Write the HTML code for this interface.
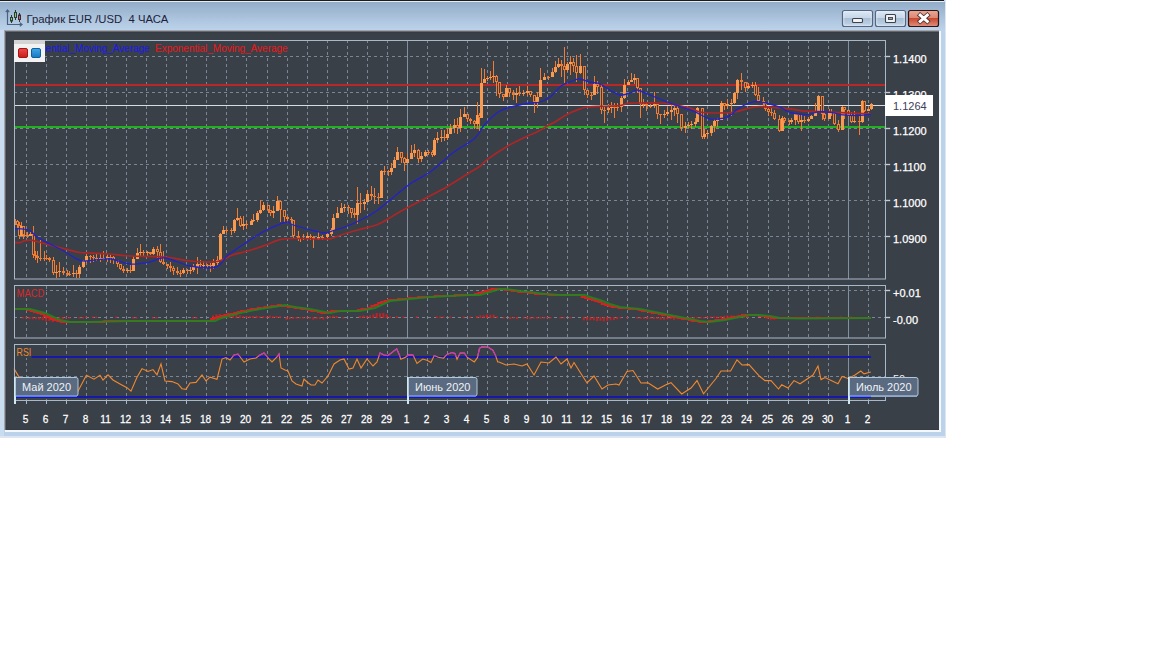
<!DOCTYPE html>
<html><head><meta charset="utf-8"><title>chart</title>
<style>html,body{margin:0;padding:0;background:#ffffff;width:1152px;height:648px;overflow:hidden;font-family:"Liberation Sans",sans-serif;}
svg{position:absolute;left:0;top:0;}</style></head>
<body><svg width="1152" height="648" viewBox="0 0 1152 648">
<defs><linearGradient id="tb" x1="0" y1="0" x2="0" y2="1"><stop offset="0" stop-color="#93adc9"/><stop offset="1" stop-color="#bcd3ea"/></linearGradient><linearGradient id="btn" x1="0" y1="0" x2="0" y2="1"><stop offset="0" stop-color="#dde9f5"/><stop offset="0.5" stop-color="#c5d6e8"/><stop offset="0.5" stop-color="#a9bfd6"/><stop offset="1" stop-color="#c3d5e8"/></linearGradient><linearGradient id="cls" x1="0" y1="0" x2="0" y2="1"><stop offset="0" stop-color="#eaa898"/><stop offset="0.5" stop-color="#dc8470"/><stop offset="0.5" stop-color="#c74a30"/><stop offset="1" stop-color="#e09080"/></linearGradient><linearGradient id="rq" x1="0" y1="0" x2="0" y2="1"><stop offset="0" stop-color="#f04848"/><stop offset="1" stop-color="#c81c1c"/></linearGradient><linearGradient id="bq" x1="0" y1="0" x2="0" y2="1"><stop offset="0" stop-color="#40a8e8"/><stop offset="1" stop-color="#1878c0"/></linearGradient><clipPath id="mainclip"><rect x="15" y="41" width="870" height="238"/></clipPath><clipPath id="rsiup"><rect x="15" y="340" width="870" height="16.5"/></clipPath></defs>
<rect x="0" y="0" width="946" height="438" fill="#dde6ef"/>
<rect x="0" y="0" width="945" height="436" fill="#bcd2ea"/>
<rect x="0" y="30" width="4" height="406" fill="#cadcf0"/>
<rect x="0" y="2" width="945" height="28" fill="url(#tb)"/>
<rect x="0" y="0" width="944" height="1" fill="#1c1c1c"/>
<rect x="0" y="1" width="944" height="1" fill="#e4eef8"/>
<rect x="4" y="30" width="935" height="400" fill="#a2a6ac"/>
<rect x="5" y="31" width="934" height="399" fill="#64686e"/>
<rect x="6" y="32" width="933" height="398" fill="#363c44"/>
<rect x="7" y="33" width="932" height="396" fill="#3a4048"/>
<rect x="5" y="430" width="936" height="2" fill="#f4f8fc"/>
<rect x="939" y="31" width="2" height="401" fill="#f4f8fc"/>
<g stroke-width="1" fill="none"><path d="M7.5 10.5 V24.5 H21.5" stroke="#4a6282" stroke-width="1.2"/><path d="M5.8 12.2 L7.5 10 L9.2 12.2 M19.8 22.8 L22 24.5 L19.8 26.2" stroke="#4a6282" stroke-width="1.2"/><path d="M11.5 15 V23 M15.5 10 V20 M19.5 13 V22" stroke="#2c3440"/><rect x="10.5" y="17.5" width="2" height="3.5" fill="#8cc07c" stroke="#284030"/><rect x="14.5" y="12.5" width="2" height="5" fill="#8cc07c" stroke="#284030"/><rect x="18.5" y="15" width="2" height="4.5" fill="#b86878" stroke="#402830"/></g>
<text x="26.5" y="23" font-family="Liberation Sans" font-size="11.3" fill="#1e1e3a" xml:space="preserve">График EUR /USD&#160; 4 ЧАСА</text>
<rect x="842.5" y="10.5" width="30" height="16" rx="2" fill="url(#btn)" stroke="#56667e" stroke-width="1.2"/><rect x="843.8" y="11.8" width="27.4" height="13.4" rx="1" fill="none" stroke="#eef4fa" stroke-opacity="0.6"/>
<rect x="852.5" y="18.5" width="10" height="4" rx="1" fill="#f4f2f0" stroke="#3a4250" stroke-width="1.1"/>
<rect x="875.5" y="10.5" width="30" height="16" rx="2" fill="url(#btn)" stroke="#56667e" stroke-width="1.2"/><rect x="876.8" y="11.8" width="27.4" height="13.4" rx="1" fill="none" stroke="#eef4fa" stroke-opacity="0.6"/>
<rect x="885.5" y="14.5" width="10" height="8" rx="1" fill="#f2f2f2" stroke="#3a4250" stroke-width="1.1"/><rect x="888.5" y="17.5" width="4" height="2" fill="#9aa0a8" stroke="#3a4250" stroke-width="0.9"/>
<rect x="908.5" y="10.5" width="30" height="16" rx="2" fill="url(#cls)" stroke="#2a1414" stroke-width="1.2"/>
<path d="M920.2 15.2 L927.3 21.3 M927.3 15.2 L920.2 21.3" stroke="#4a2a28" stroke-width="4.6" stroke-linecap="square"/><path d="M920.2 15.2 L927.3 21.3 M927.3 15.2 L920.2 21.3" stroke="#ffffff" stroke-width="3" stroke-linecap="square"/>
<g shape-rendering="crispEdges">
<line x1="26.5" y1="40" x2="26.5" y2="279" stroke="#7c8692" stroke-width="1" stroke-dasharray="3 3"/>
<line x1="46.5" y1="40" x2="46.5" y2="279" stroke="#7c8692" stroke-width="1" stroke-dasharray="3 3"/>
<line x1="66.5" y1="40" x2="66.5" y2="279" stroke="#7c8692" stroke-width="1" stroke-dasharray="3 3"/>
<line x1="86.5" y1="40" x2="86.5" y2="279" stroke="#7c8692" stroke-width="1" stroke-dasharray="3 3"/>
<line x1="106.5" y1="40" x2="106.5" y2="279" stroke="#7c8692" stroke-width="1" stroke-dasharray="3 3"/>
<line x1="126.5" y1="40" x2="126.5" y2="279" stroke="#7c8692" stroke-width="1" stroke-dasharray="3 3"/>
<line x1="146.5" y1="40" x2="146.5" y2="279" stroke="#7c8692" stroke-width="1" stroke-dasharray="3 3"/>
<line x1="166.5" y1="40" x2="166.5" y2="279" stroke="#7c8692" stroke-width="1" stroke-dasharray="3 3"/>
<line x1="186.5" y1="40" x2="186.5" y2="279" stroke="#7c8692" stroke-width="1" stroke-dasharray="3 3"/>
<line x1="206.5" y1="40" x2="206.5" y2="279" stroke="#7c8692" stroke-width="1" stroke-dasharray="3 3"/>
<line x1="226.5" y1="40" x2="226.5" y2="279" stroke="#7c8692" stroke-width="1" stroke-dasharray="3 3"/>
<line x1="246.5" y1="40" x2="246.5" y2="279" stroke="#7c8692" stroke-width="1" stroke-dasharray="3 3"/>
<line x1="267.5" y1="40" x2="267.5" y2="279" stroke="#7c8692" stroke-width="1" stroke-dasharray="3 3"/>
<line x1="287.5" y1="40" x2="287.5" y2="279" stroke="#7c8692" stroke-width="1" stroke-dasharray="3 3"/>
<line x1="307.5" y1="40" x2="307.5" y2="279" stroke="#7c8692" stroke-width="1" stroke-dasharray="3 3"/>
<line x1="327.5" y1="40" x2="327.5" y2="279" stroke="#7c8692" stroke-width="1" stroke-dasharray="3 3"/>
<line x1="347.5" y1="40" x2="347.5" y2="279" stroke="#7c8692" stroke-width="1" stroke-dasharray="3 3"/>
<line x1="367.5" y1="40" x2="367.5" y2="279" stroke="#7c8692" stroke-width="1" stroke-dasharray="3 3"/>
<line x1="387.5" y1="40" x2="387.5" y2="279" stroke="#7c8692" stroke-width="1" stroke-dasharray="3 3"/>
<line x1="407.5" y1="40" x2="407.5" y2="279" stroke="#8090a0" stroke-width="1"/>
<line x1="427.5" y1="40" x2="427.5" y2="279" stroke="#7c8692" stroke-width="1" stroke-dasharray="3 3"/>
<line x1="447.5" y1="40" x2="447.5" y2="279" stroke="#7c8692" stroke-width="1" stroke-dasharray="3 3"/>
<line x1="467.5" y1="40" x2="467.5" y2="279" stroke="#7c8692" stroke-width="1" stroke-dasharray="3 3"/>
<line x1="487.5" y1="40" x2="487.5" y2="279" stroke="#7c8692" stroke-width="1" stroke-dasharray="3 3"/>
<line x1="507.5" y1="40" x2="507.5" y2="279" stroke="#7c8692" stroke-width="1" stroke-dasharray="3 3"/>
<line x1="527.5" y1="40" x2="527.5" y2="279" stroke="#7c8692" stroke-width="1" stroke-dasharray="3 3"/>
<line x1="547.5" y1="40" x2="547.5" y2="279" stroke="#7c8692" stroke-width="1" stroke-dasharray="3 3"/>
<line x1="567.5" y1="40" x2="567.5" y2="279" stroke="#7c8692" stroke-width="1" stroke-dasharray="3 3"/>
<line x1="587.5" y1="40" x2="587.5" y2="279" stroke="#7c8692" stroke-width="1" stroke-dasharray="3 3"/>
<line x1="607.5" y1="40" x2="607.5" y2="279" stroke="#7c8692" stroke-width="1" stroke-dasharray="3 3"/>
<line x1="627.5" y1="40" x2="627.5" y2="279" stroke="#7c8692" stroke-width="1" stroke-dasharray="3 3"/>
<line x1="647.5" y1="40" x2="647.5" y2="279" stroke="#7c8692" stroke-width="1" stroke-dasharray="3 3"/>
<line x1="667.5" y1="40" x2="667.5" y2="279" stroke="#7c8692" stroke-width="1" stroke-dasharray="3 3"/>
<line x1="687.5" y1="40" x2="687.5" y2="279" stroke="#7c8692" stroke-width="1" stroke-dasharray="3 3"/>
<line x1="707.5" y1="40" x2="707.5" y2="279" stroke="#7c8692" stroke-width="1" stroke-dasharray="3 3"/>
<line x1="727.5" y1="40" x2="727.5" y2="279" stroke="#7c8692" stroke-width="1" stroke-dasharray="3 3"/>
<line x1="747.5" y1="40" x2="747.5" y2="279" stroke="#7c8692" stroke-width="1" stroke-dasharray="3 3"/>
<line x1="768.5" y1="40" x2="768.5" y2="279" stroke="#7c8692" stroke-width="1" stroke-dasharray="3 3"/>
<line x1="788.5" y1="40" x2="788.5" y2="279" stroke="#7c8692" stroke-width="1" stroke-dasharray="3 3"/>
<line x1="808.5" y1="40" x2="808.5" y2="279" stroke="#7c8692" stroke-width="1" stroke-dasharray="3 3"/>
<line x1="828.5" y1="40" x2="828.5" y2="279" stroke="#7c8692" stroke-width="1" stroke-dasharray="3 3"/>
<line x1="848.5" y1="40" x2="848.5" y2="279" stroke="#8090a0" stroke-width="1"/>
<line x1="868.5" y1="40" x2="868.5" y2="279" stroke="#7c8692" stroke-width="1" stroke-dasharray="3 3"/>
<line x1="14" y1="56.5" x2="886" y2="56.5" stroke="#7c8692" stroke-width="1" stroke-dasharray="3 3"/>
<line x1="14" y1="92.5" x2="886" y2="92.5" stroke="#7c8692" stroke-width="1" stroke-dasharray="3 3"/>
<line x1="14" y1="128.5" x2="886" y2="128.5" stroke="#7c8692" stroke-width="1" stroke-dasharray="3 3"/>
<line x1="14" y1="164.5" x2="886" y2="164.5" stroke="#7c8692" stroke-width="1" stroke-dasharray="3 3"/>
<line x1="14" y1="200.5" x2="886" y2="200.5" stroke="#7c8692" stroke-width="1" stroke-dasharray="3 3"/>
<line x1="14" y1="236.5" x2="886" y2="236.5" stroke="#7c8692" stroke-width="1" stroke-dasharray="3 3"/>
</g>
<rect x="14" y="84" width="872" height="2" fill="#b82828"/>
<rect x="14" y="105" width="872" height="1" fill="#d8dce0"/>
<rect x="14" y="126" width="872" height="2" fill="#20b020"/>
<g clip-path="url(#mainclip)">
<rect x="15" y="219" width="1" height="6" fill="#f27c32"/>
<rect x="14" y="221" width="3" height="1" fill="#f27c32"/>
<rect x="17" y="220" width="1" height="9" fill="#f27c32"/>
<rect x="16" y="221" width="3" height="4" fill="#f27c32"/><rect x="17" y="222" width="1" height="2" fill="#3a4048"/>
<rect x="19" y="222" width="1" height="17" fill="#f27c32"/>
<rect x="18" y="225" width="3" height="11" fill="#f27c32"/><rect x="19" y="226" width="1" height="9" fill="#3a4048"/>
<rect x="21" y="222" width="1" height="14" fill="#f27c32"/>
<rect x="20" y="226" width="3" height="10" fill="#f89a50"/>
<rect x="23" y="226" width="1" height="13" fill="#f27c32"/>
<rect x="22" y="226" width="3" height="9" fill="#f27c32"/><rect x="23" y="227" width="1" height="7" fill="#3a4048"/>
<rect x="24" y="233" width="1" height="4" fill="#f27c32"/>
<rect x="23" y="235" width="3" height="1" fill="#f27c32"/>
<rect x="27" y="232" width="1" height="6" fill="#f27c32"/>
<rect x="26" y="235" width="3" height="1" fill="#f27c32"/>
<rect x="30" y="232" width="1" height="4" fill="#f27c32"/>
<rect x="29" y="234" width="3" height="2" fill="#f89a50"/>
<rect x="33" y="226" width="1" height="32" fill="#f27c32"/>
<rect x="32" y="234" width="3" height="21" fill="#f27c32"/><rect x="33" y="235" width="1" height="19" fill="#3a4048"/>
<rect x="35" y="251" width="1" height="9" fill="#f27c32"/>
<rect x="34" y="255" width="3" height="1" fill="#f27c32"/>
<rect x="37" y="251" width="1" height="12" fill="#f27c32"/>
<rect x="36" y="256" width="3" height="2" fill="#f27c32"/>
<rect x="40" y="240" width="1" height="21" fill="#f27c32"/>
<rect x="39" y="258" width="3" height="1" fill="#f27c32"/>
<rect x="44" y="251" width="1" height="10" fill="#f27c32"/>
<rect x="43" y="258" width="3" height="1" fill="#f27c32"/>
<rect x="46" y="255" width="1" height="5" fill="#f27c32"/>
<rect x="45" y="258" width="3" height="1" fill="#f27c32"/>
<rect x="49" y="257" width="1" height="5" fill="#f27c32"/>
<rect x="48" y="258" width="3" height="2" fill="#f27c32"/>
<rect x="53" y="257" width="1" height="18" fill="#f27c32"/>
<rect x="52" y="260" width="3" height="13" fill="#f27c32"/><rect x="53" y="261" width="1" height="11" fill="#3a4048"/>
<rect x="56" y="265" width="1" height="13" fill="#f27c32"/>
<rect x="55" y="272" width="3" height="1" fill="#f89a50"/>
<rect x="59" y="262" width="1" height="15" fill="#f27c32"/>
<rect x="58" y="271" width="3" height="1" fill="#f89a50"/>
<rect x="63" y="267" width="1" height="8" fill="#f27c32"/>
<rect x="62" y="271" width="3" height="2" fill="#f27c32"/>
<rect x="67" y="270" width="1" height="6" fill="#f27c32"/>
<rect x="66" y="273" width="3" height="1" fill="#f27c32"/>
<rect x="69" y="271" width="1" height="5" fill="#f27c32"/>
<rect x="68" y="274" width="3" height="1" fill="#f27c32"/>
<rect x="73" y="265" width="1" height="12" fill="#f27c32"/>
<rect x="72" y="273" width="3" height="1" fill="#f89a50"/>
<rect x="76" y="270" width="1" height="8" fill="#f27c32"/>
<rect x="75" y="273" width="3" height="1" fill="#f27c32"/>
<rect x="79" y="265" width="1" height="13" fill="#f27c32"/>
<rect x="78" y="267" width="3" height="7" fill="#f89a50"/>
<rect x="83" y="260" width="1" height="8" fill="#f27c32"/>
<rect x="82" y="261" width="3" height="6" fill="#f89a50"/>
<rect x="86" y="254" width="1" height="9" fill="#f27c32"/>
<rect x="85" y="256" width="3" height="5" fill="#f89a50"/>
<rect x="90" y="255" width="1" height="8" fill="#f27c32"/>
<rect x="89" y="256" width="3" height="1" fill="#f27c32"/>
<rect x="93" y="255" width="1" height="7" fill="#f27c32"/>
<rect x="92" y="257" width="3" height="1" fill="#f27c32"/>
<rect x="96" y="254" width="1" height="7" fill="#f27c32"/>
<rect x="95" y="258" width="3" height="1" fill="#f27c32"/>
<rect x="100" y="253" width="1" height="9" fill="#f27c32"/>
<rect x="99" y="258" width="3" height="1" fill="#f89a50"/>
<rect x="103" y="251" width="1" height="9" fill="#f27c32"/>
<rect x="102" y="258" width="3" height="1" fill="#f89a50"/>
<rect x="107" y="254" width="1" height="8" fill="#f27c32"/>
<rect x="106" y="257" width="3" height="1" fill="#f89a50"/>
<rect x="110" y="255" width="1" height="8" fill="#f27c32"/>
<rect x="109" y="257" width="3" height="1" fill="#f27c32"/>
<rect x="113" y="256" width="1" height="8" fill="#f27c32"/>
<rect x="112" y="257" width="3" height="3" fill="#f27c32"/><rect x="113" y="258" width="1" height="1" fill="#3a4048"/>
<rect x="117" y="260" width="1" height="7" fill="#f27c32"/>
<rect x="116" y="260" width="3" height="4" fill="#f27c32"/><rect x="117" y="261" width="1" height="2" fill="#3a4048"/>
<rect x="120" y="264" width="1" height="6" fill="#f27c32"/>
<rect x="119" y="264" width="3" height="5" fill="#f27c32"/><rect x="120" y="265" width="1" height="3" fill="#3a4048"/>
<rect x="123" y="266" width="1" height="7" fill="#f27c32"/>
<rect x="122" y="269" width="3" height="2" fill="#f27c32"/>
<rect x="127" y="268" width="1" height="5" fill="#f27c32"/>
<rect x="126" y="270" width="3" height="1" fill="#f89a50"/>
<rect x="130" y="265" width="1" height="8" fill="#f27c32"/>
<rect x="129" y="270" width="3" height="1" fill="#f27c32"/>
<rect x="133" y="256" width="1" height="15" fill="#f27c32"/>
<rect x="132" y="259" width="3" height="12" fill="#f89a50"/>
<rect x="137" y="248" width="1" height="11" fill="#f27c32"/>
<rect x="136" y="253" width="3" height="6" fill="#f89a50"/>
<rect x="140" y="244" width="1" height="12" fill="#f27c32"/>
<rect x="139" y="252" width="3" height="1" fill="#f89a50"/>
<rect x="143" y="250" width="1" height="6" fill="#f27c32"/>
<rect x="142" y="252" width="3" height="1" fill="#f27c32"/>
<rect x="147" y="251" width="1" height="5" fill="#f27c32"/>
<rect x="146" y="252" width="3" height="1" fill="#f89a50"/>
<rect x="150" y="252" width="1" height="3" fill="#f27c32"/>
<rect x="149" y="252" width="3" height="2" fill="#f27c32"/>
<rect x="153" y="247" width="1" height="8" fill="#f27c32"/>
<rect x="152" y="249" width="3" height="5" fill="#f89a50"/>
<rect x="157" y="246" width="1" height="12" fill="#f27c32"/>
<rect x="156" y="249" width="3" height="3" fill="#f27c32"/><rect x="157" y="250" width="1" height="1" fill="#3a4048"/>
<rect x="160" y="244" width="1" height="19" fill="#f27c32"/>
<rect x="159" y="252" width="3" height="10" fill="#f27c32"/><rect x="160" y="253" width="1" height="8" fill="#3a4048"/>
<rect x="163" y="251" width="1" height="14" fill="#f27c32"/>
<rect x="162" y="262" width="3" height="2" fill="#f27c32"/>
<rect x="167" y="264" width="1" height="5" fill="#f27c32"/>
<rect x="166" y="264" width="3" height="2" fill="#f27c32"/>
<rect x="170" y="262" width="1" height="10" fill="#f27c32"/>
<rect x="169" y="266" width="3" height="2" fill="#f27c32"/>
<rect x="173" y="266" width="1" height="9" fill="#f27c32"/>
<rect x="172" y="268" width="3" height="3" fill="#f27c32"/><rect x="173" y="269" width="1" height="1" fill="#3a4048"/>
<rect x="177" y="267" width="1" height="8" fill="#f27c32"/>
<rect x="176" y="271" width="3" height="2" fill="#f27c32"/>
<rect x="180" y="270" width="1" height="7" fill="#f27c32"/>
<rect x="179" y="273" width="3" height="1" fill="#f27c32"/>
<rect x="183" y="268" width="1" height="6" fill="#f27c32"/>
<rect x="182" y="270" width="3" height="3" fill="#f89a50"/>
<rect x="187" y="269" width="1" height="5" fill="#f27c32"/>
<rect x="186" y="270" width="3" height="1" fill="#f27c32"/>
<rect x="190" y="267" width="1" height="7" fill="#f27c32"/>
<rect x="189" y="270" width="3" height="1" fill="#f89a50"/>
<rect x="193" y="264" width="1" height="8" fill="#f27c32"/>
<rect x="192" y="267" width="3" height="3" fill="#f89a50"/>
<rect x="197" y="257" width="1" height="17" fill="#f27c32"/>
<rect x="196" y="264" width="3" height="3" fill="#f89a50"/>
<rect x="200" y="260" width="1" height="8" fill="#f27c32"/>
<rect x="199" y="264" width="3" height="1" fill="#f27c32"/>
<rect x="203" y="261" width="1" height="8" fill="#f27c32"/>
<rect x="202" y="265" width="3" height="1" fill="#f89a50"/>
<rect x="207" y="264" width="1" height="4" fill="#f27c32"/>
<rect x="206" y="265" width="3" height="1" fill="#f27c32"/>
<rect x="210" y="263" width="1" height="9" fill="#f27c32"/>
<rect x="209" y="265" width="3" height="1" fill="#f27c32"/>
<rect x="213" y="259" width="1" height="10" fill="#f27c32"/>
<rect x="212" y="263" width="3" height="3" fill="#f89a50"/>
<rect x="217" y="256" width="1" height="9" fill="#f27c32"/>
<rect x="216" y="260" width="3" height="3" fill="#f89a50"/>
<rect x="220" y="233" width="1" height="27" fill="#f27c32"/>
<rect x="219" y="234" width="3" height="26" fill="#f89a50"/>
<rect x="223" y="226" width="1" height="8" fill="#f27c32"/>
<rect x="222" y="230" width="3" height="4" fill="#f89a50"/>
<rect x="226" y="228" width="1" height="5" fill="#f27c32"/>
<rect x="225" y="230" width="3" height="1" fill="#f27c32"/>
<rect x="231" y="228" width="1" height="7" fill="#f27c32"/>
<rect x="230" y="230" width="3" height="1" fill="#f27c32"/>
<rect x="234" y="219" width="1" height="14" fill="#f27c32"/>
<rect x="233" y="220" width="3" height="11" fill="#f89a50"/>
<rect x="237" y="208" width="1" height="13" fill="#f27c32"/>
<rect x="236" y="218" width="3" height="2" fill="#f89a50"/>
<rect x="240" y="216" width="1" height="11" fill="#f27c32"/>
<rect x="239" y="218" width="3" height="8" fill="#f27c32"/><rect x="240" y="219" width="1" height="6" fill="#3a4048"/>
<rect x="243" y="216" width="1" height="14" fill="#f27c32"/>
<rect x="242" y="224" width="3" height="2" fill="#f89a50"/>
<rect x="246" y="221" width="1" height="8" fill="#f27c32"/>
<rect x="245" y="224" width="3" height="1" fill="#f27c32"/>
<rect x="251" y="219" width="1" height="6" fill="#f27c32"/>
<rect x="250" y="221" width="3" height="4" fill="#f89a50"/>
<rect x="253" y="214" width="1" height="8" fill="#f27c32"/>
<rect x="252" y="220" width="3" height="1" fill="#f89a50"/>
<rect x="257" y="211" width="1" height="11" fill="#f27c32"/>
<rect x="256" y="213" width="3" height="7" fill="#f89a50"/>
<rect x="260" y="200" width="1" height="14" fill="#f27c32"/>
<rect x="259" y="210" width="3" height="3" fill="#f89a50"/>
<rect x="263" y="202" width="1" height="9" fill="#f27c32"/>
<rect x="262" y="205" width="3" height="5" fill="#f89a50"/>
<rect x="268" y="205" width="1" height="8" fill="#f27c32"/>
<rect x="267" y="205" width="3" height="5" fill="#f27c32"/><rect x="268" y="206" width="1" height="3" fill="#3a4048"/>
<rect x="270" y="210" width="1" height="6" fill="#f27c32"/>
<rect x="269" y="210" width="3" height="3" fill="#f27c32"/><rect x="270" y="211" width="1" height="1" fill="#3a4048"/>
<rect x="273" y="206" width="1" height="12" fill="#f27c32"/>
<rect x="272" y="211" width="3" height="2" fill="#f89a50"/>
<rect x="277" y="196" width="1" height="15" fill="#f27c32"/>
<rect x="276" y="201" width="3" height="10" fill="#f89a50"/>
<rect x="280" y="201" width="1" height="21" fill="#f27c32"/>
<rect x="279" y="201" width="3" height="9" fill="#f27c32"/><rect x="280" y="202" width="1" height="7" fill="#3a4048"/>
<rect x="284" y="210" width="1" height="12" fill="#f27c32"/>
<rect x="283" y="210" width="3" height="7" fill="#f27c32"/><rect x="284" y="211" width="1" height="5" fill="#3a4048"/>
<rect x="287" y="216" width="1" height="6" fill="#f27c32"/>
<rect x="286" y="217" width="3" height="2" fill="#f27c32"/>
<rect x="291" y="217" width="1" height="8" fill="#f27c32"/>
<rect x="290" y="219" width="3" height="1" fill="#f27c32"/>
<rect x="293" y="220" width="1" height="18" fill="#f27c32"/>
<rect x="292" y="220" width="3" height="16" fill="#f27c32"/><rect x="293" y="221" width="1" height="14" fill="#3a4048"/>
<rect x="298" y="231" width="1" height="10" fill="#f27c32"/>
<rect x="297" y="236" width="3" height="2" fill="#f27c32"/>
<rect x="300" y="238" width="1" height="4" fill="#f27c32"/>
<rect x="299" y="238" width="3" height="1" fill="#f27c32"/>
<rect x="303" y="234" width="1" height="6" fill="#f27c32"/>
<rect x="302" y="238" width="3" height="1" fill="#f89a50"/>
<rect x="307" y="233" width="1" height="5" fill="#f27c32"/>
<rect x="306" y="236" width="3" height="2" fill="#f89a50"/>
<rect x="310" y="234" width="1" height="6" fill="#f27c32"/>
<rect x="309" y="236" width="3" height="1" fill="#f27c32"/>
<rect x="313" y="236" width="1" height="12" fill="#f27c32"/>
<rect x="312" y="237" width="3" height="2" fill="#f27c32"/>
<rect x="318" y="232" width="1" height="8" fill="#f27c32"/>
<rect x="317" y="237" width="3" height="2" fill="#f89a50"/>
<rect x="322" y="235" width="1" height="5" fill="#f27c32"/>
<rect x="321" y="237" width="3" height="1" fill="#f27c32"/>
<rect x="327" y="232" width="1" height="6" fill="#f27c32"/>
<rect x="326" y="234" width="3" height="3" fill="#f89a50"/>
<rect x="331" y="228" width="1" height="8" fill="#f27c32"/>
<rect x="330" y="230" width="3" height="4" fill="#f89a50"/>
<rect x="333" y="214" width="1" height="16" fill="#f27c32"/>
<rect x="332" y="218" width="3" height="12" fill="#f89a50"/>
<rect x="337" y="207" width="1" height="11" fill="#f27c32"/>
<rect x="336" y="213" width="3" height="5" fill="#f89a50"/>
<rect x="341" y="203" width="1" height="10" fill="#f27c32"/>
<rect x="340" y="208" width="3" height="5" fill="#f89a50"/>
<rect x="344" y="204" width="1" height="8" fill="#f27c32"/>
<rect x="343" y="207" width="3" height="1" fill="#f89a50"/>
<rect x="348" y="205" width="1" height="9" fill="#f27c32"/>
<rect x="347" y="207" width="3" height="1" fill="#f27c32"/>
<rect x="351" y="208" width="1" height="10" fill="#f27c32"/>
<rect x="350" y="208" width="3" height="5" fill="#f27c32"/><rect x="351" y="209" width="1" height="3" fill="#3a4048"/>
<rect x="354" y="208" width="1" height="10" fill="#f27c32"/>
<rect x="353" y="213" width="3" height="2" fill="#f27c32"/>
<rect x="357" y="187" width="1" height="37" fill="#f27c32"/>
<rect x="356" y="203" width="3" height="12" fill="#f89a50"/>
<rect x="360" y="193" width="1" height="20" fill="#f27c32"/>
<rect x="359" y="203" width="3" height="1" fill="#f27c32"/>
<rect x="364" y="199" width="1" height="11" fill="#f27c32"/>
<rect x="363" y="202" width="3" height="2" fill="#f89a50"/>
<rect x="367" y="190" width="1" height="12" fill="#f27c32"/>
<rect x="366" y="194" width="3" height="8" fill="#f89a50"/>
<rect x="371" y="186" width="1" height="14" fill="#f27c32"/>
<rect x="370" y="194" width="3" height="2" fill="#f27c32"/>
<rect x="374" y="188" width="1" height="16" fill="#f27c32"/>
<rect x="373" y="196" width="3" height="1" fill="#f27c32"/>
<rect x="378" y="193" width="1" height="11" fill="#f27c32"/>
<rect x="377" y="197" width="3" height="1" fill="#f27c32"/>
<rect x="381" y="170" width="1" height="28" fill="#f27c32"/>
<rect x="380" y="171" width="3" height="27" fill="#f89a50"/>
<rect x="384" y="166" width="1" height="9" fill="#f27c32"/>
<rect x="383" y="171" width="3" height="1" fill="#f27c32"/>
<rect x="388" y="170" width="1" height="6" fill="#f27c32"/>
<rect x="387" y="171" width="3" height="1" fill="#f27c32"/>
<rect x="391" y="163" width="1" height="12" fill="#f27c32"/>
<rect x="390" y="168" width="3" height="4" fill="#f89a50"/>
<rect x="394" y="157" width="1" height="11" fill="#f27c32"/>
<rect x="393" y="160" width="3" height="8" fill="#f89a50"/>
<rect x="397" y="147" width="1" height="13" fill="#f27c32"/>
<rect x="396" y="152" width="3" height="8" fill="#f89a50"/>
<rect x="401" y="152" width="1" height="11" fill="#f27c32"/>
<rect x="400" y="152" width="3" height="6" fill="#f27c32"/><rect x="401" y="153" width="1" height="4" fill="#3a4048"/>
<rect x="404" y="157" width="1" height="14" fill="#f27c32"/>
<rect x="403" y="158" width="3" height="5" fill="#f27c32"/><rect x="404" y="159" width="1" height="3" fill="#3a4048"/>
<rect x="407" y="153" width="1" height="10" fill="#f27c32"/>
<rect x="406" y="159" width="3" height="4" fill="#f89a50"/>
<rect x="411" y="145" width="1" height="14" fill="#f27c32"/>
<rect x="410" y="153" width="3" height="6" fill="#f89a50"/>
<rect x="414" y="144" width="1" height="13" fill="#f27c32"/>
<rect x="413" y="150" width="3" height="3" fill="#f89a50"/>
<rect x="418" y="149" width="1" height="14" fill="#f27c32"/>
<rect x="417" y="150" width="3" height="9" fill="#f27c32"/><rect x="418" y="151" width="1" height="7" fill="#3a4048"/>
<rect x="421" y="152" width="1" height="10" fill="#f27c32"/>
<rect x="420" y="156" width="3" height="3" fill="#f89a50"/>
<rect x="425" y="150" width="1" height="7" fill="#f27c32"/>
<rect x="424" y="152" width="3" height="4" fill="#f89a50"/>
<rect x="428" y="150" width="1" height="5" fill="#f27c32"/>
<rect x="427" y="152" width="3" height="1" fill="#f27c32"/>
<rect x="432" y="150" width="1" height="7" fill="#f27c32"/>
<rect x="431" y="152" width="3" height="3" fill="#f27c32"/><rect x="432" y="153" width="1" height="1" fill="#3a4048"/>
<rect x="434" y="138" width="1" height="18" fill="#f27c32"/>
<rect x="433" y="140" width="3" height="15" fill="#f89a50"/>
<rect x="437" y="132" width="1" height="11" fill="#f27c32"/>
<rect x="436" y="138" width="3" height="2" fill="#f89a50"/>
<rect x="441" y="130" width="1" height="12" fill="#f27c32"/>
<rect x="440" y="137" width="3" height="1" fill="#f89a50"/>
<rect x="444" y="130" width="1" height="11" fill="#f27c32"/>
<rect x="443" y="137" width="3" height="1" fill="#f27c32"/>
<rect x="447" y="128" width="1" height="12" fill="#f27c32"/>
<rect x="446" y="134" width="3" height="4" fill="#f89a50"/>
<rect x="450" y="124" width="1" height="10" fill="#f27c32"/>
<rect x="449" y="128" width="3" height="6" fill="#f89a50"/>
<rect x="454" y="119" width="1" height="14" fill="#f27c32"/>
<rect x="453" y="125" width="3" height="3" fill="#f89a50"/>
<rect x="457" y="118" width="1" height="16" fill="#f27c32"/>
<rect x="456" y="125" width="3" height="3" fill="#f27c32"/><rect x="457" y="126" width="1" height="1" fill="#3a4048"/>
<rect x="460" y="109" width="1" height="23" fill="#f27c32"/>
<rect x="459" y="117" width="3" height="11" fill="#f89a50"/>
<rect x="464" y="107" width="1" height="10" fill="#f27c32"/>
<rect x="463" y="114" width="3" height="3" fill="#f89a50"/>
<rect x="467" y="114" width="1" height="8" fill="#f27c32"/>
<rect x="466" y="114" width="3" height="5" fill="#f27c32"/><rect x="467" y="115" width="1" height="3" fill="#3a4048"/>
<rect x="470" y="118" width="1" height="6" fill="#f27c32"/>
<rect x="469" y="119" width="3" height="2" fill="#f27c32"/>
<rect x="474" y="120" width="1" height="9" fill="#f27c32"/>
<rect x="473" y="121" width="3" height="3" fill="#f27c32"/><rect x="474" y="122" width="1" height="1" fill="#3a4048"/>
<rect x="477" y="102" width="1" height="27" fill="#f27c32"/>
<rect x="476" y="115" width="3" height="9" fill="#f89a50"/>
<rect x="479" y="113" width="1" height="18" fill="#f27c32"/>
<rect x="478" y="115" width="3" height="3" fill="#f27c32"/><rect x="479" y="116" width="1" height="1" fill="#3a4048"/>
<rect x="481" y="68" width="1" height="50" fill="#f27c32"/>
<rect x="480" y="83" width="3" height="35" fill="#f89a50"/>
<rect x="484" y="69" width="1" height="14" fill="#f27c32"/>
<rect x="483" y="79" width="3" height="4" fill="#f89a50"/>
<rect x="487" y="76" width="1" height="5" fill="#f27c32"/>
<rect x="486" y="78" width="3" height="1" fill="#f89a50"/>
<rect x="490" y="71" width="1" height="9" fill="#f27c32"/>
<rect x="489" y="77" width="3" height="1" fill="#f89a50"/>
<rect x="493" y="61" width="1" height="22" fill="#f27c32"/>
<rect x="492" y="76" width="3" height="1" fill="#f89a50"/>
<rect x="496" y="75" width="1" height="21" fill="#f27c32"/>
<rect x="495" y="76" width="3" height="6" fill="#f27c32"/><rect x="496" y="77" width="1" height="4" fill="#3a4048"/>
<rect x="499" y="82" width="1" height="16" fill="#f27c32"/>
<rect x="498" y="82" width="3" height="12" fill="#f27c32"/><rect x="499" y="83" width="1" height="10" fill="#3a4048"/>
<rect x="503" y="94" width="1" height="7" fill="#f27c32"/>
<rect x="502" y="94" width="3" height="3" fill="#f27c32"/><rect x="503" y="95" width="1" height="1" fill="#3a4048"/>
<rect x="506" y="85" width="1" height="12" fill="#f27c32"/>
<rect x="505" y="88" width="3" height="9" fill="#f89a50"/>
<rect x="509" y="88" width="1" height="9" fill="#f27c32"/>
<rect x="508" y="88" width="3" height="5" fill="#f27c32"/><rect x="509" y="89" width="1" height="3" fill="#3a4048"/>
<rect x="513" y="90" width="1" height="10" fill="#f27c32"/>
<rect x="512" y="93" width="3" height="2" fill="#f27c32"/>
<rect x="516" y="88" width="1" height="15" fill="#f27c32"/>
<rect x="515" y="93" width="3" height="2" fill="#f89a50"/>
<rect x="519" y="86" width="1" height="10" fill="#f27c32"/>
<rect x="518" y="93" width="3" height="1" fill="#f27c32"/>
<rect x="523" y="90" width="1" height="6" fill="#f27c32"/>
<rect x="522" y="93" width="3" height="1" fill="#f89a50"/>
<rect x="527" y="86" width="1" height="10" fill="#f27c32"/>
<rect x="526" y="91" width="3" height="2" fill="#f89a50"/>
<rect x="530" y="91" width="1" height="6" fill="#f27c32"/>
<rect x="529" y="91" width="3" height="4" fill="#f27c32"/><rect x="530" y="92" width="1" height="2" fill="#3a4048"/>
<rect x="534" y="95" width="1" height="18" fill="#f27c32"/>
<rect x="533" y="95" width="3" height="7" fill="#f27c32"/><rect x="534" y="96" width="1" height="5" fill="#3a4048"/>
<rect x="537" y="92" width="1" height="16" fill="#f27c32"/>
<rect x="536" y="97" width="3" height="5" fill="#f89a50"/>
<rect x="540" y="68" width="1" height="29" fill="#f27c32"/>
<rect x="539" y="80" width="3" height="17" fill="#f89a50"/>
<rect x="544" y="73" width="1" height="7" fill="#f27c32"/>
<rect x="543" y="77" width="3" height="3" fill="#f89a50"/>
<rect x="548" y="76" width="1" height="4" fill="#f27c32"/>
<rect x="547" y="77" width="3" height="1" fill="#f27c32"/>
<rect x="552" y="68" width="1" height="9" fill="#f27c32"/>
<rect x="551" y="72" width="3" height="5" fill="#f89a50"/>
<rect x="555" y="61" width="1" height="12" fill="#f27c32"/>
<rect x="554" y="67" width="3" height="5" fill="#f89a50"/>
<rect x="558" y="58" width="1" height="10" fill="#f27c32"/>
<rect x="557" y="64" width="3" height="3" fill="#f89a50"/>
<rect x="561" y="60" width="1" height="17" fill="#f27c32"/>
<rect x="560" y="64" width="3" height="2" fill="#f27c32"/>
<rect x="564" y="47" width="1" height="36" fill="#f27c32"/>
<rect x="563" y="66" width="3" height="4" fill="#f27c32"/><rect x="564" y="67" width="1" height="2" fill="#3a4048"/>
<rect x="567" y="62" width="1" height="10" fill="#f27c32"/>
<rect x="566" y="64" width="3" height="6" fill="#f89a50"/>
<rect x="570" y="56" width="1" height="19" fill="#f27c32"/>
<rect x="569" y="62" width="3" height="2" fill="#f89a50"/>
<rect x="573" y="58" width="1" height="14" fill="#f27c32"/>
<rect x="572" y="62" width="3" height="4" fill="#f27c32"/><rect x="573" y="63" width="1" height="2" fill="#3a4048"/>
<rect x="576" y="55" width="1" height="27" fill="#f27c32"/>
<rect x="575" y="66" width="3" height="7" fill="#f27c32"/><rect x="576" y="67" width="1" height="5" fill="#3a4048"/>
<rect x="580" y="54" width="1" height="20" fill="#f27c32"/>
<rect x="579" y="66" width="3" height="7" fill="#f89a50"/>
<rect x="584" y="66" width="1" height="29" fill="#f27c32"/>
<rect x="583" y="66" width="3" height="24" fill="#f27c32"/><rect x="584" y="67" width="1" height="22" fill="#3a4048"/>
<rect x="587" y="90" width="1" height="8" fill="#f27c32"/>
<rect x="586" y="90" width="3" height="5" fill="#f27c32"/><rect x="587" y="91" width="1" height="3" fill="#3a4048"/>
<rect x="591" y="92" width="1" height="8" fill="#f27c32"/>
<rect x="590" y="95" width="3" height="1" fill="#f27c32"/>
<rect x="594" y="76" width="1" height="19" fill="#f27c32"/>
<rect x="593" y="84" width="3" height="11" fill="#f89a50"/>
<rect x="597" y="81" width="1" height="13" fill="#f27c32"/>
<rect x="596" y="84" width="3" height="3" fill="#f27c32"/><rect x="597" y="85" width="1" height="1" fill="#3a4048"/>
<rect x="601" y="84" width="1" height="30" fill="#f27c32"/>
<rect x="600" y="87" width="3" height="23" fill="#f27c32"/><rect x="601" y="88" width="1" height="21" fill="#3a4048"/>
<rect x="604" y="106" width="1" height="17" fill="#f27c32"/>
<rect x="603" y="110" width="3" height="1" fill="#f27c32"/>
<rect x="608" y="104" width="1" height="9" fill="#f27c32"/>
<rect x="607" y="108" width="3" height="2" fill="#f89a50"/>
<rect x="611" y="102" width="1" height="11" fill="#f27c32"/>
<rect x="610" y="107" width="3" height="1" fill="#f89a50"/>
<rect x="614" y="103" width="1" height="15" fill="#f27c32"/>
<rect x="613" y="107" width="3" height="1" fill="#f27c32"/>
<rect x="617" y="103" width="1" height="8" fill="#f27c32"/>
<rect x="616" y="107" width="3" height="1" fill="#f27c32"/>
<rect x="621" y="96" width="1" height="16" fill="#f27c32"/>
<rect x="620" y="98" width="3" height="9" fill="#f89a50"/>
<rect x="624" y="79" width="1" height="20" fill="#f27c32"/>
<rect x="623" y="85" width="3" height="13" fill="#f89a50"/>
<rect x="628" y="80" width="1" height="5" fill="#f27c32"/>
<rect x="627" y="82" width="3" height="3" fill="#f89a50"/>
<rect x="631" y="73" width="1" height="9" fill="#f27c32"/>
<rect x="630" y="80" width="3" height="2" fill="#f89a50"/>
<rect x="634" y="74" width="1" height="10" fill="#f27c32"/>
<rect x="633" y="78" width="3" height="2" fill="#f89a50"/>
<rect x="637" y="78" width="1" height="15" fill="#f27c32"/>
<rect x="636" y="78" width="3" height="10" fill="#f27c32"/><rect x="637" y="79" width="1" height="8" fill="#3a4048"/>
<rect x="640" y="88" width="1" height="30" fill="#f27c32"/>
<rect x="639" y="88" width="3" height="16" fill="#f27c32"/><rect x="640" y="89" width="1" height="14" fill="#3a4048"/>
<rect x="643" y="99" width="1" height="9" fill="#f27c32"/>
<rect x="642" y="104" width="3" height="1" fill="#f27c32"/>
<rect x="646" y="102" width="1" height="9" fill="#f27c32"/>
<rect x="645" y="104" width="3" height="2" fill="#f27c32"/>
<rect x="650" y="104" width="1" height="4" fill="#f27c32"/>
<rect x="649" y="106" width="3" height="1" fill="#f27c32"/>
<rect x="654" y="92" width="1" height="16" fill="#f27c32"/>
<rect x="653" y="104" width="3" height="2" fill="#f89a50"/>
<rect x="657" y="104" width="1" height="15" fill="#f27c32"/>
<rect x="656" y="104" width="3" height="10" fill="#f27c32"/><rect x="657" y="105" width="1" height="8" fill="#3a4048"/>
<rect x="660" y="114" width="1" height="10" fill="#f27c32"/>
<rect x="659" y="114" width="3" height="1" fill="#f27c32"/>
<rect x="664" y="110" width="1" height="8" fill="#f27c32"/>
<rect x="663" y="114" width="3" height="1" fill="#f89a50"/>
<rect x="667" y="107" width="1" height="9" fill="#f27c32"/>
<rect x="666" y="112" width="3" height="2" fill="#f89a50"/>
<rect x="671" y="105" width="1" height="15" fill="#f27c32"/>
<rect x="670" y="110" width="3" height="2" fill="#f89a50"/>
<rect x="674" y="104" width="1" height="12" fill="#f27c32"/>
<rect x="673" y="108" width="3" height="2" fill="#f89a50"/>
<rect x="677" y="105" width="1" height="18" fill="#f27c32"/>
<rect x="676" y="108" width="3" height="6" fill="#f27c32"/><rect x="677" y="109" width="1" height="4" fill="#3a4048"/>
<rect x="681" y="114" width="1" height="17" fill="#f27c32"/>
<rect x="680" y="114" width="3" height="14" fill="#f27c32"/><rect x="681" y="115" width="1" height="12" fill="#3a4048"/>
<rect x="685" y="122" width="1" height="11" fill="#f27c32"/>
<rect x="684" y="126" width="3" height="2" fill="#f89a50"/>
<rect x="688" y="122" width="1" height="6" fill="#f27c32"/>
<rect x="687" y="125" width="3" height="1" fill="#f89a50"/>
<rect x="691" y="121" width="1" height="8" fill="#f27c32"/>
<rect x="690" y="124" width="3" height="1" fill="#f89a50"/>
<rect x="695" y="118" width="1" height="9" fill="#f27c32"/>
<rect x="694" y="122" width="3" height="2" fill="#f89a50"/>
<rect x="697" y="107" width="1" height="15" fill="#f27c32"/>
<rect x="696" y="108" width="3" height="14" fill="#f89a50"/>
<rect x="702" y="108" width="1" height="31" fill="#f27c32"/>
<rect x="701" y="108" width="3" height="29" fill="#f27c32"/><rect x="702" y="109" width="1" height="27" fill="#3a4048"/>
<rect x="704" y="129" width="1" height="10" fill="#f27c32"/>
<rect x="703" y="134" width="3" height="3" fill="#f89a50"/>
<rect x="707" y="130" width="1" height="8" fill="#f27c32"/>
<rect x="706" y="133" width="3" height="1" fill="#f89a50"/>
<rect x="711" y="125" width="1" height="11" fill="#f27c32"/>
<rect x="710" y="126" width="3" height="7" fill="#f89a50"/>
<rect x="714" y="119" width="1" height="13" fill="#f27c32"/>
<rect x="713" y="121" width="3" height="5" fill="#f89a50"/>
<rect x="717" y="118" width="1" height="9" fill="#f27c32"/>
<rect x="716" y="120" width="3" height="1" fill="#f89a50"/>
<rect x="721" y="101" width="1" height="19" fill="#f27c32"/>
<rect x="720" y="103" width="3" height="17" fill="#f89a50"/>
<rect x="724" y="103" width="1" height="7" fill="#f27c32"/>
<rect x="723" y="103" width="3" height="3" fill="#f27c32"/><rect x="724" y="104" width="1" height="1" fill="#3a4048"/>
<rect x="727" y="99" width="1" height="10" fill="#f27c32"/>
<rect x="726" y="104" width="3" height="2" fill="#f89a50"/>
<rect x="731" y="99" width="1" height="17" fill="#f27c32"/>
<rect x="730" y="103" width="3" height="1" fill="#f89a50"/>
<rect x="734" y="92" width="1" height="12" fill="#f27c32"/>
<rect x="733" y="93" width="3" height="10" fill="#f89a50"/>
<rect x="737" y="79" width="1" height="20" fill="#f27c32"/>
<rect x="736" y="80" width="3" height="13" fill="#f89a50"/>
<rect x="741" y="73" width="1" height="17" fill="#f27c32"/>
<rect x="740" y="80" width="3" height="2" fill="#f27c32"/>
<rect x="745" y="82" width="1" height="10" fill="#f27c32"/>
<rect x="744" y="82" width="3" height="6" fill="#f27c32"/><rect x="745" y="83" width="1" height="4" fill="#3a4048"/>
<rect x="748" y="83" width="1" height="6" fill="#f27c32"/>
<rect x="747" y="86" width="3" height="2" fill="#f89a50"/>
<rect x="752" y="82" width="1" height="6" fill="#f27c32"/>
<rect x="751" y="85" width="3" height="1" fill="#f89a50"/>
<rect x="755" y="82" width="1" height="14" fill="#f27c32"/>
<rect x="754" y="85" width="3" height="10" fill="#f27c32"/><rect x="755" y="86" width="1" height="8" fill="#3a4048"/>
<rect x="758" y="87" width="1" height="15" fill="#f27c32"/>
<rect x="757" y="95" width="3" height="6" fill="#f27c32"/><rect x="758" y="96" width="1" height="4" fill="#3a4048"/>
<rect x="763" y="97" width="1" height="9" fill="#f27c32"/>
<rect x="762" y="101" width="3" height="2" fill="#f27c32"/>
<rect x="765" y="103" width="1" height="8" fill="#f27c32"/>
<rect x="764" y="103" width="3" height="6" fill="#f27c32"/><rect x="765" y="104" width="1" height="4" fill="#3a4048"/>
<rect x="768" y="108" width="1" height="8" fill="#f27c32"/>
<rect x="767" y="109" width="3" height="3" fill="#f27c32"/><rect x="768" y="110" width="1" height="1" fill="#3a4048"/>
<rect x="771" y="107" width="1" height="9" fill="#f27c32"/>
<rect x="770" y="112" width="3" height="1" fill="#f27c32"/>
<rect x="774" y="110" width="1" height="10" fill="#f27c32"/>
<rect x="773" y="113" width="3" height="6" fill="#f27c32"/><rect x="774" y="114" width="1" height="4" fill="#3a4048"/>
<rect x="779" y="115" width="1" height="17" fill="#f27c32"/>
<rect x="778" y="119" width="3" height="12" fill="#f27c32"/><rect x="779" y="120" width="1" height="10" fill="#3a4048"/>
<rect x="782" y="116" width="1" height="15" fill="#f27c32"/>
<rect x="781" y="118" width="3" height="13" fill="#f89a50"/>
<rect x="784" y="117" width="1" height="6" fill="#f27c32"/>
<rect x="783" y="118" width="3" height="3" fill="#f27c32"/><rect x="784" y="119" width="1" height="1" fill="#3a4048"/>
<rect x="789" y="120" width="1" height="5" fill="#f27c32"/>
<rect x="788" y="121" width="3" height="1" fill="#f27c32"/>
<rect x="791" y="118" width="1" height="6" fill="#f27c32"/>
<rect x="790" y="120" width="3" height="2" fill="#f89a50"/>
<rect x="795" y="113" width="1" height="12" fill="#f27c32"/>
<rect x="794" y="114" width="3" height="6" fill="#f89a50"/>
<rect x="798" y="114" width="1" height="10" fill="#f27c32"/>
<rect x="797" y="114" width="3" height="8" fill="#f27c32"/><rect x="798" y="115" width="1" height="6" fill="#3a4048"/>
<rect x="801" y="115" width="1" height="16" fill="#f27c32"/>
<rect x="800" y="120" width="3" height="2" fill="#f89a50"/>
<rect x="804" y="116" width="1" height="7" fill="#f27c32"/>
<rect x="803" y="120" width="3" height="1" fill="#f27c32"/>
<rect x="808" y="117" width="1" height="5" fill="#f27c32"/>
<rect x="807" y="119" width="3" height="2" fill="#f89a50"/>
<rect x="811" y="115" width="1" height="4" fill="#f27c32"/>
<rect x="810" y="116" width="3" height="3" fill="#f89a50"/>
<rect x="815" y="103" width="1" height="13" fill="#f27c32"/>
<rect x="814" y="111" width="3" height="5" fill="#f89a50"/>
<rect x="818" y="95" width="1" height="16" fill="#f27c32"/>
<rect x="817" y="96" width="3" height="15" fill="#f89a50"/>
<rect x="822" y="96" width="1" height="24" fill="#f27c32"/>
<rect x="821" y="96" width="3" height="18" fill="#f27c32"/><rect x="822" y="97" width="1" height="16" fill="#3a4048"/>
<rect x="824" y="112" width="1" height="9" fill="#f27c32"/>
<rect x="823" y="114" width="3" height="5" fill="#f27c32"/><rect x="824" y="115" width="1" height="3" fill="#3a4048"/>
<rect x="829" y="109" width="1" height="10" fill="#f27c32"/>
<rect x="828" y="112" width="3" height="7" fill="#f89a50"/>
<rect x="831" y="109" width="1" height="7" fill="#f27c32"/>
<rect x="830" y="112" width="3" height="1" fill="#f27c32"/>
<rect x="834" y="113" width="1" height="12" fill="#f27c32"/>
<rect x="833" y="113" width="3" height="11" fill="#f27c32"/><rect x="834" y="114" width="1" height="9" fill="#3a4048"/>
<rect x="838" y="120" width="1" height="12" fill="#f27c32"/>
<rect x="837" y="124" width="3" height="6" fill="#f27c32"/><rect x="838" y="125" width="1" height="4" fill="#3a4048"/>
<rect x="842" y="106" width="1" height="24" fill="#f27c32"/>
<rect x="841" y="107" width="3" height="23" fill="#f89a50"/>
<rect x="844" y="107" width="1" height="12" fill="#f27c32"/>
<rect x="843" y="107" width="3" height="3" fill="#f27c32"/><rect x="844" y="108" width="1" height="1" fill="#3a4048"/>
<rect x="848" y="110" width="1" height="7" fill="#f27c32"/>
<rect x="847" y="110" width="3" height="5" fill="#f27c32"/><rect x="848" y="111" width="1" height="3" fill="#3a4048"/>
<rect x="851" y="112" width="1" height="11" fill="#f27c32"/>
<rect x="850" y="115" width="3" height="7" fill="#f27c32"/><rect x="851" y="116" width="1" height="5" fill="#3a4048"/>
<rect x="854" y="111" width="1" height="12" fill="#f27c32"/>
<rect x="853" y="121" width="3" height="1" fill="#f89a50"/>
<rect x="859" y="115" width="1" height="20" fill="#f27c32"/>
<rect x="858" y="121" width="3" height="1" fill="#f27c32"/>
<rect x="862" y="100" width="1" height="23" fill="#f27c32"/>
<rect x="861" y="101" width="3" height="21" fill="#f89a50"/>
<rect x="864" y="101" width="1" height="11" fill="#f27c32"/>
<rect x="863" y="101" width="3" height="10" fill="#f27c32"/><rect x="864" y="102" width="1" height="8" fill="#3a4048"/>
<rect x="868" y="107" width="1" height="4" fill="#f27c32"/>
<rect x="867" y="109" width="3" height="2" fill="#f89a50"/>
<rect x="871" y="103" width="1" height="7" fill="#f27c32"/>
<rect x="870" y="104" width="3" height="5" fill="#f89a50"/>
<path d="M14.0,242.6 C15.1,242.6 18.8,242.9 20.4,242.6 C22.0,242.3 22.0,241.3 23.9,240.9 C25.8,240.5 28.5,239.8 32.0,240.3 C35.5,240.8 40.7,242.7 44.7,243.8 C48.8,244.9 52.4,245.7 56.3,246.7 C60.2,247.7 64.1,248.6 67.9,249.6 C71.8,250.6 75.7,251.9 79.4,252.5 C83.1,253.1 84.9,252.8 90.0,253.0 C95.1,253.2 103.3,253.5 110.0,254.0 C116.7,254.5 120.8,255.5 130.0,256.0 C139.2,256.5 155.0,256.2 165.0,257.0 C175.0,257.8 181.3,260.2 190.0,261.0 C198.7,261.8 209.9,262.5 217.0,261.5 C224.1,260.5 227.1,256.8 232.4,255.0 C237.7,253.2 243.2,252.4 248.6,250.8 C254.0,249.2 259.6,247.3 265.0,245.4 C270.4,243.5 275.2,240.6 281.0,239.4 C286.8,238.2 293.8,238.6 300.0,238.5 C306.2,238.4 312.8,239.0 318.0,239.0 C323.2,239.0 328.0,239.0 331.0,238.6 C334.0,238.2 333.3,237.7 336.0,236.8 C338.7,235.9 342.3,234.4 347.0,233.0 C351.7,231.6 358.8,229.8 364.0,228.4 C369.2,227.0 373.7,226.1 378.0,224.3 C382.3,222.5 386.3,219.9 390.0,217.8 C393.7,215.7 393.8,215.1 400.0,211.7 C406.2,208.3 419.1,201.7 427.0,197.5 C434.9,193.3 440.8,190.3 447.5,186.4 C454.2,182.5 461.9,177.4 467.3,174.0 C472.7,170.6 476.6,168.6 480.0,166.2 C483.4,163.8 482.9,162.7 487.4,159.4 C491.9,156.1 500.3,150.3 507.0,146.4 C513.7,142.5 522.5,138.4 527.5,136.0 C532.5,133.6 533.7,133.7 537.0,132.0 C540.3,130.3 544.3,127.7 547.3,126.0 C550.3,124.3 551.7,123.8 555.0,121.9 C558.3,120.0 562.8,116.6 567.0,114.4 C571.2,112.2 576.7,110.1 580.0,108.9 C583.3,107.7 583.8,107.4 587.0,107.0 C590.2,106.6 593.5,106.7 599.0,106.4 C604.5,106.2 615.2,106.0 620.0,105.5 C624.8,105.0 624.7,103.7 628.0,103.3 C631.3,102.9 634.7,103.0 640.0,103.0 C645.3,103.0 655.0,102.8 660.0,103.0 C665.0,103.2 665.0,103.2 670.0,104.0 C675.0,104.8 685.0,106.7 690.0,108.0 C695.0,109.3 695.0,111.2 700.0,112.0 C705.0,112.8 714.2,113.0 720.0,113.0 C725.8,113.0 730.0,112.8 735.0,112.0 C740.0,111.2 745.8,108.9 750.0,108.0 C754.2,107.1 755.0,106.5 760.0,106.5 C765.0,106.5 774.7,107.5 780.0,108.0 C785.3,108.5 788.4,108.7 792.0,109.2 C795.6,109.7 798.2,110.5 801.6,110.8 C805.0,111.1 807.0,111.0 812.4,111.3 C817.8,111.6 827.9,112.1 834.0,112.4 C840.1,112.7 842.8,112.7 849.0,113.0 C855.2,113.3 867.3,113.8 871.0,114.0" fill="none" stroke="#ac2626" stroke-width="1.7"/>
<path d="M14.0,230.0 C14.5,229.8 14.4,228.6 17.0,228.7 C19.6,228.8 26.4,229.2 29.7,230.5 C33.0,231.8 33.5,234.7 36.6,236.8 C39.7,238.9 44.0,241.0 48.2,243.2 C52.4,245.4 56.8,247.2 62.0,250.0 C67.2,252.8 74.7,258.4 79.4,260.2 C84.1,262.0 84.9,260.8 90.0,260.6 C95.1,260.4 103.3,258.4 110.0,259.0 C116.7,259.6 123.3,263.5 130.0,264.0 C136.7,264.5 144.2,263.0 150.0,262.0 C155.8,261.0 158.3,257.3 165.0,258.0 C171.7,258.7 181.5,264.5 190.0,266.0 C198.5,267.5 209.8,268.7 216.0,267.0 C222.2,265.3 223.3,259.2 227.0,256.0 C230.7,252.8 234.4,250.5 238.0,248.0 C241.6,245.5 244.1,243.9 248.6,241.0 C253.1,238.1 260.1,233.5 265.0,230.8 C269.9,228.1 274.2,226.3 278.0,224.8 C281.8,223.3 285.2,222.1 287.5,222.0 C289.8,221.9 289.9,223.7 292.0,224.5 C294.1,225.3 296.2,225.9 300.0,227.0 C303.8,228.1 310.8,230.0 315.0,231.0 C319.2,232.0 321.7,233.2 325.0,233.0 C328.3,232.8 330.8,231.3 335.0,230.0 C339.2,228.7 343.3,228.0 350.0,225.0 C356.7,222.0 368.3,216.2 375.0,212.0 C381.7,207.8 384.2,204.7 390.0,200.0 C395.8,195.3 403.3,188.7 410.0,184.0 C416.7,179.3 423.3,176.8 430.0,172.0 C436.7,167.2 445.5,158.7 450.0,155.0 C454.5,151.3 452.8,152.8 457.0,150.0 C461.2,147.2 470.3,142.3 475.0,138.0 C479.7,133.7 480.8,128.5 485.0,124.0 C489.2,119.5 495.0,114.0 500.0,111.0 C505.0,108.0 510.0,107.3 515.0,106.0 C520.0,104.7 525.8,103.7 530.0,103.0 C534.2,102.3 536.7,103.0 540.0,102.0 C543.3,101.0 546.7,99.5 550.0,97.0 C553.3,94.5 557.5,89.2 560.0,87.0 C562.5,84.8 562.5,85.2 565.0,84.0 C567.5,82.8 572.5,80.8 575.0,80.0 C577.5,79.2 577.5,78.7 580.0,79.0 C582.5,79.3 586.7,81.2 590.0,82.0 C593.3,82.8 596.7,82.7 600.0,84.0 C603.3,85.3 606.7,88.2 610.0,90.0 C613.3,91.8 616.7,94.5 620.0,95.0 C623.3,95.5 627.2,93.8 630.0,93.0 C632.8,92.2 633.7,89.7 637.0,90.0 C640.3,90.3 646.2,93.5 650.0,95.0 C653.8,96.5 656.7,97.7 660.0,99.0 C663.3,100.3 666.7,101.8 670.0,103.0 C673.3,104.2 676.0,105.1 680.0,106.5 C684.0,107.9 689.3,109.4 694.0,111.4 C698.7,113.4 704.1,117.0 708.0,118.3 C711.9,119.6 714.1,119.3 717.5,119.0 C720.9,118.7 725.1,118.0 728.6,116.3 C732.1,114.6 734.8,110.8 738.3,108.6 C741.8,106.4 746.1,104.2 749.4,103.0 C752.6,101.8 754.5,101.6 757.8,101.7 C761.1,101.8 765.3,102.8 769.0,103.8 C772.7,104.7 777.1,106.0 780.0,107.2 C782.9,108.4 784.5,109.8 786.5,110.8 C788.5,111.8 788.6,112.4 792.0,113.0 C795.4,113.6 802.7,114.8 807.0,114.6 C811.3,114.4 813.8,112.3 818.0,111.9 C822.2,111.5 828.2,112.0 832.0,112.4 C835.8,112.9 836.6,114.1 840.5,114.6 C844.4,115.1 850.5,115.6 855.6,115.6 C860.7,115.5 868.4,114.5 871.0,114.3" fill="none" stroke="#2222c8" stroke-width="1.3"/>
</g>
<rect x="14.5" y="40.5" width="871" height="238.5" fill="none" stroke="#a8b8c8" stroke-width="1"/>
<rect x="45" y="41" width="245" height="14" fill="#3a4048"/>
<text x="17" y="52" font-family="Liberation Sans" font-size="10" fill="#1a1ae8">Exponential_Moving_Average</text>
<text x="155" y="52" font-family="Liberation Sans" font-size="10" fill="#e81818">Exponential_Moving_Average</text>
<rect x="14" y="40" width="31" height="22" fill="#f2f2f2"/><rect x="14" y="40" width="31" height="4" fill="#d4d4d4"/>
<rect x="18.5" y="48.5" width="9" height="9" rx="1.5" fill="url(#rq)" stroke="#a01818"/>
<rect x="31.5" y="48.5" width="9" height="9" rx="1.5" fill="url(#bq)" stroke="#1060a0"/>
<g font-family="Liberation Sans" font-size="11" fill="#ffffff" stroke="#ffffff" stroke-width="0.25">
<rect x="886" y="56" width="4" height="1" fill="#a8b8c8"/>
<text x="893" y="63">1.1400</text>
<rect x="886" y="92" width="4" height="1" fill="#a8b8c8"/>
<text x="893" y="99">1.1300</text>
<rect x="886" y="128" width="4" height="1" fill="#a8b8c8"/>
<text x="893" y="135">1.1200</text>
<rect x="886" y="164" width="4" height="1" fill="#a8b8c8"/>
<text x="893" y="171">1.1100</text>
<rect x="886" y="200" width="4" height="1" fill="#a8b8c8"/>
<text x="893" y="207">1.1000</text>
<rect x="886" y="236" width="4" height="1" fill="#a8b8c8"/>
<text x="893" y="243">1.0900</text>
</g>
<rect x="885" y="95" width="48" height="21" fill="#ffffff"/>
<text x="893" y="109.5" font-family="Liberation Sans" font-size="11" fill="#404058">1.1264</text>
<g shape-rendering="crispEdges">
<line x1="26.5" y1="286" x2="26.5" y2="338" stroke="#7c8692" stroke-width="1" stroke-dasharray="3 3"/>
<line x1="46.5" y1="286" x2="46.5" y2="338" stroke="#7c8692" stroke-width="1" stroke-dasharray="3 3"/>
<line x1="66.5" y1="286" x2="66.5" y2="338" stroke="#7c8692" stroke-width="1" stroke-dasharray="3 3"/>
<line x1="86.5" y1="286" x2="86.5" y2="338" stroke="#7c8692" stroke-width="1" stroke-dasharray="3 3"/>
<line x1="106.5" y1="286" x2="106.5" y2="338" stroke="#7c8692" stroke-width="1" stroke-dasharray="3 3"/>
<line x1="126.5" y1="286" x2="126.5" y2="338" stroke="#7c8692" stroke-width="1" stroke-dasharray="3 3"/>
<line x1="146.5" y1="286" x2="146.5" y2="338" stroke="#7c8692" stroke-width="1" stroke-dasharray="3 3"/>
<line x1="166.5" y1="286" x2="166.5" y2="338" stroke="#7c8692" stroke-width="1" stroke-dasharray="3 3"/>
<line x1="186.5" y1="286" x2="186.5" y2="338" stroke="#7c8692" stroke-width="1" stroke-dasharray="3 3"/>
<line x1="206.5" y1="286" x2="206.5" y2="338" stroke="#7c8692" stroke-width="1" stroke-dasharray="3 3"/>
<line x1="226.5" y1="286" x2="226.5" y2="338" stroke="#7c8692" stroke-width="1" stroke-dasharray="3 3"/>
<line x1="246.5" y1="286" x2="246.5" y2="338" stroke="#7c8692" stroke-width="1" stroke-dasharray="3 3"/>
<line x1="267.5" y1="286" x2="267.5" y2="338" stroke="#7c8692" stroke-width="1" stroke-dasharray="3 3"/>
<line x1="287.5" y1="286" x2="287.5" y2="338" stroke="#7c8692" stroke-width="1" stroke-dasharray="3 3"/>
<line x1="307.5" y1="286" x2="307.5" y2="338" stroke="#7c8692" stroke-width="1" stroke-dasharray="3 3"/>
<line x1="327.5" y1="286" x2="327.5" y2="338" stroke="#7c8692" stroke-width="1" stroke-dasharray="3 3"/>
<line x1="347.5" y1="286" x2="347.5" y2="338" stroke="#7c8692" stroke-width="1" stroke-dasharray="3 3"/>
<line x1="367.5" y1="286" x2="367.5" y2="338" stroke="#7c8692" stroke-width="1" stroke-dasharray="3 3"/>
<line x1="387.5" y1="286" x2="387.5" y2="338" stroke="#7c8692" stroke-width="1" stroke-dasharray="3 3"/>
<line x1="407.5" y1="286" x2="407.5" y2="338" stroke="#8090a0" stroke-width="1"/>
<line x1="427.5" y1="286" x2="427.5" y2="338" stroke="#7c8692" stroke-width="1" stroke-dasharray="3 3"/>
<line x1="447.5" y1="286" x2="447.5" y2="338" stroke="#7c8692" stroke-width="1" stroke-dasharray="3 3"/>
<line x1="467.5" y1="286" x2="467.5" y2="338" stroke="#7c8692" stroke-width="1" stroke-dasharray="3 3"/>
<line x1="487.5" y1="286" x2="487.5" y2="338" stroke="#7c8692" stroke-width="1" stroke-dasharray="3 3"/>
<line x1="507.5" y1="286" x2="507.5" y2="338" stroke="#7c8692" stroke-width="1" stroke-dasharray="3 3"/>
<line x1="527.5" y1="286" x2="527.5" y2="338" stroke="#7c8692" stroke-width="1" stroke-dasharray="3 3"/>
<line x1="547.5" y1="286" x2="547.5" y2="338" stroke="#7c8692" stroke-width="1" stroke-dasharray="3 3"/>
<line x1="567.5" y1="286" x2="567.5" y2="338" stroke="#7c8692" stroke-width="1" stroke-dasharray="3 3"/>
<line x1="587.5" y1="286" x2="587.5" y2="338" stroke="#7c8692" stroke-width="1" stroke-dasharray="3 3"/>
<line x1="607.5" y1="286" x2="607.5" y2="338" stroke="#7c8692" stroke-width="1" stroke-dasharray="3 3"/>
<line x1="627.5" y1="286" x2="627.5" y2="338" stroke="#7c8692" stroke-width="1" stroke-dasharray="3 3"/>
<line x1="647.5" y1="286" x2="647.5" y2="338" stroke="#7c8692" stroke-width="1" stroke-dasharray="3 3"/>
<line x1="667.5" y1="286" x2="667.5" y2="338" stroke="#7c8692" stroke-width="1" stroke-dasharray="3 3"/>
<line x1="687.5" y1="286" x2="687.5" y2="338" stroke="#7c8692" stroke-width="1" stroke-dasharray="3 3"/>
<line x1="707.5" y1="286" x2="707.5" y2="338" stroke="#7c8692" stroke-width="1" stroke-dasharray="3 3"/>
<line x1="727.5" y1="286" x2="727.5" y2="338" stroke="#7c8692" stroke-width="1" stroke-dasharray="3 3"/>
<line x1="747.5" y1="286" x2="747.5" y2="338" stroke="#7c8692" stroke-width="1" stroke-dasharray="3 3"/>
<line x1="768.5" y1="286" x2="768.5" y2="338" stroke="#7c8692" stroke-width="1" stroke-dasharray="3 3"/>
<line x1="788.5" y1="286" x2="788.5" y2="338" stroke="#7c8692" stroke-width="1" stroke-dasharray="3 3"/>
<line x1="808.5" y1="286" x2="808.5" y2="338" stroke="#7c8692" stroke-width="1" stroke-dasharray="3 3"/>
<line x1="828.5" y1="286" x2="828.5" y2="338" stroke="#7c8692" stroke-width="1" stroke-dasharray="3 3"/>
<line x1="848.5" y1="286" x2="848.5" y2="338" stroke="#8090a0" stroke-width="1"/>
<line x1="868.5" y1="286" x2="868.5" y2="338" stroke="#7c8692" stroke-width="1" stroke-dasharray="3 3"/>
<line x1="14" y1="290.5" x2="886" y2="290.5" stroke="#7c8692" stroke-width="1" stroke-dasharray="3 3"/>
<line x1="14" y1="317.5" x2="886" y2="317.5" stroke="#7c8692" stroke-width="1" stroke-dasharray="3 3"/>
</g>
<rect x="21.7" y="317" width="2" height="1.5" fill="#d02020" opacity="0.85"/>
<rect x="25.0" y="317" width="2" height="1.5" fill="#d02020" opacity="0.85"/>
<rect x="28.4" y="317" width="2" height="2.1" fill="#d02020" opacity="0.85"/>
<rect x="31.7" y="317" width="2" height="2.3" fill="#d02020" opacity="0.85"/>
<rect x="35.0" y="317" width="2" height="2.2" fill="#d02020" opacity="0.85"/>
<rect x="38.4" y="317" width="2" height="2.5" fill="#d02020" opacity="0.85"/>
<rect x="41.7" y="317" width="2" height="3.3" fill="#d02020" opacity="0.85"/>
<rect x="45.1" y="317" width="2" height="4.4" fill="#d02020" opacity="0.85"/>
<rect x="48.4" y="317" width="2" height="4.0" fill="#d02020" opacity="0.85"/>
<rect x="51.7" y="317" width="2" height="5.0" fill="#d02020" opacity="0.85"/>
<rect x="55.1" y="317" width="2" height="4.0" fill="#d02020" opacity="0.85"/>
<rect x="58.4" y="317" width="2" height="2.4" fill="#d02020" opacity="0.85"/>
<rect x="61.8" y="317" width="2" height="2.0" fill="#d02020" opacity="0.85"/>
<rect x="65.1" y="317" width="2" height="1.6" fill="#d02020" opacity="0.85"/>
<rect x="68.4" y="317" width="2" height="1.5" fill="#d02020" opacity="0.85"/>
<rect x="78.5" y="317" width="2" height="1.5" fill="#d02020" opacity="0.85"/>
<rect x="81.8" y="317" width="2" height="1.5" fill="#d02020" opacity="0.85"/>
<rect x="85.1" y="316.5" width="2" height="1.5" fill="#d02020" opacity="0.85"/>
<rect x="91.8" y="316.5" width="2" height="1.5" fill="#d02020" opacity="0.85"/>
<rect x="95.2" y="316.5" width="2" height="1.5" fill="#d02020" opacity="0.85"/>
<rect x="115.2" y="316.5" width="2" height="1.5" fill="#d02020" opacity="0.85"/>
<rect x="131.9" y="317" width="2" height="1.5" fill="#d02020" opacity="0.85"/>
<rect x="135.2" y="317" width="2" height="1.5" fill="#d02020" opacity="0.85"/>
<rect x="151.9" y="317" width="2" height="1.5" fill="#d02020" opacity="0.85"/>
<rect x="155.3" y="317" width="2" height="1.5" fill="#d02020" opacity="0.85"/>
<rect x="192.0" y="317" width="2" height="1.5" fill="#d02020" opacity="0.85"/>
<rect x="195.4" y="317" width="2" height="1.5" fill="#d02020" opacity="0.85"/>
<rect x="212.1" y="315.4" width="2" height="2.6" fill="#d02020" opacity="0.85"/>
<rect x="215.4" y="314.4" width="2" height="3.6" fill="#d02020" opacity="0.85"/>
<rect x="218.7" y="314.2" width="2" height="3.8" fill="#d02020" opacity="0.85"/>
<rect x="222.1" y="314.9" width="2" height="3.1" fill="#d02020" opacity="0.85"/>
<rect x="225.4" y="315.1" width="2" height="2.9" fill="#d02020" opacity="0.85"/>
<rect x="228.8" y="314.6" width="2" height="3.4" fill="#d02020" opacity="0.85"/>
<rect x="232.1" y="315.2" width="2" height="2.8" fill="#d02020" opacity="0.85"/>
<rect x="235.4" y="314.9" width="2" height="3.1" fill="#d02020" opacity="0.85"/>
<rect x="238.8" y="315.2" width="2" height="2.8" fill="#d02020" opacity="0.85"/>
<rect x="242.1" y="316.1" width="2" height="1.9" fill="#d02020" opacity="0.85"/>
<rect x="245.5" y="316.0" width="2" height="2.0" fill="#d02020" opacity="0.85"/>
<rect x="248.8" y="316.0" width="2" height="2.0" fill="#d02020" opacity="0.85"/>
<rect x="252.1" y="316.0" width="2" height="2.0" fill="#d02020" opacity="0.85"/>
<rect x="255.5" y="315.8" width="2" height="2.2" fill="#d02020" opacity="0.85"/>
<rect x="258.8" y="316.4" width="2" height="1.6" fill="#d02020" opacity="0.85"/>
<rect x="262.2" y="316.2" width="2" height="1.8" fill="#d02020" opacity="0.85"/>
<rect x="265.5" y="316.5" width="2" height="1.5" fill="#d02020" opacity="0.85"/>
<rect x="268.8" y="315.6" width="2" height="2.4" fill="#d02020" opacity="0.85"/>
<rect x="272.2" y="316.3" width="2" height="1.7" fill="#d02020" opacity="0.85"/>
<rect x="275.5" y="316.0" width="2" height="2.0" fill="#d02020" opacity="0.85"/>
<rect x="278.9" y="316.1" width="2" height="1.9" fill="#d02020" opacity="0.85"/>
<rect x="285.5" y="317" width="2" height="2.8" fill="#d02020" opacity="0.85"/>
<rect x="288.9" y="317" width="2" height="2.2" fill="#d02020" opacity="0.85"/>
<rect x="292.2" y="317" width="2" height="2.0" fill="#d02020" opacity="0.85"/>
<rect x="295.6" y="317" width="2" height="1.7" fill="#d02020" opacity="0.85"/>
<rect x="298.9" y="317" width="2" height="1.5" fill="#d02020" opacity="0.85"/>
<rect x="302.2" y="317" width="2" height="1.6" fill="#d02020" opacity="0.85"/>
<rect x="305.6" y="317" width="2" height="1.5" fill="#d02020" opacity="0.85"/>
<rect x="308.9" y="317" width="2" height="1.6" fill="#d02020" opacity="0.85"/>
<rect x="312.3" y="317" width="2" height="2.6" fill="#d02020" opacity="0.85"/>
<rect x="315.6" y="317" width="2" height="1.9" fill="#d02020" opacity="0.85"/>
<rect x="318.9" y="317" width="2" height="2.2" fill="#d02020" opacity="0.85"/>
<rect x="322.3" y="317" width="2" height="2.6" fill="#d02020" opacity="0.85"/>
<rect x="325.6" y="317" width="2" height="1.5" fill="#d02020" opacity="0.85"/>
<rect x="329.0" y="316.2" width="2" height="1.8" fill="#d02020" opacity="0.85"/>
<rect x="332.3" y="315.7" width="2" height="2.3" fill="#d02020" opacity="0.85"/>
<rect x="335.6" y="316.0" width="2" height="2.0" fill="#d02020" opacity="0.85"/>
<rect x="342.3" y="317" width="2" height="1.5" fill="#d02020" opacity="0.85"/>
<rect x="359.0" y="315.9" width="2" height="2.1" fill="#d02020" opacity="0.85"/>
<rect x="362.4" y="315.5" width="2" height="2.5" fill="#d02020" opacity="0.85"/>
<rect x="365.7" y="315.8" width="2" height="2.2" fill="#d02020" opacity="0.85"/>
<rect x="369.0" y="315.3" width="2" height="2.7" fill="#d02020" opacity="0.85"/>
<rect x="372.4" y="314.3" width="2" height="3.7" fill="#d02020" opacity="0.85"/>
<rect x="375.7" y="313.0" width="2" height="5.0" fill="#d02020" opacity="0.85"/>
<rect x="379.1" y="313.2" width="2" height="4.8" fill="#d02020" opacity="0.85"/>
<rect x="382.4" y="313.0" width="2" height="5.0" fill="#d02020" opacity="0.85"/>
<rect x="385.7" y="314.2" width="2" height="3.8" fill="#d02020" opacity="0.85"/>
<rect x="389.1" y="316.4" width="2" height="1.6" fill="#d02020" opacity="0.85"/>
<rect x="395.8" y="316.2" width="2" height="1.8" fill="#d02020" opacity="0.85"/>
<rect x="402.4" y="316.5" width="2" height="1.5" fill="#d02020" opacity="0.85"/>
<rect x="415.8" y="316.4" width="2" height="1.6" fill="#d02020" opacity="0.85"/>
<rect x="435.8" y="316.5" width="2" height="1.5" fill="#d02020" opacity="0.85"/>
<rect x="439.2" y="316.5" width="2" height="1.5" fill="#d02020" opacity="0.85"/>
<rect x="442.5" y="316.5" width="2" height="1.5" fill="#d02020" opacity="0.85"/>
<rect x="449.2" y="316.5" width="2" height="1.5" fill="#d02020" opacity="0.85"/>
<rect x="462.6" y="316.5" width="2" height="1.5" fill="#d02020" opacity="0.85"/>
<rect x="469.2" y="316.5" width="2" height="1.5" fill="#d02020" opacity="0.85"/>
<rect x="475.9" y="316.0" width="2" height="2.0" fill="#d02020" opacity="0.85"/>
<rect x="479.3" y="315.4" width="2" height="2.6" fill="#d02020" opacity="0.85"/>
<rect x="482.6" y="315.3" width="2" height="2.7" fill="#d02020" opacity="0.85"/>
<rect x="485.9" y="314.4" width="2" height="3.6" fill="#d02020" opacity="0.85"/>
<rect x="489.3" y="314.8" width="2" height="3.2" fill="#d02020" opacity="0.85"/>
<rect x="492.6" y="314.6" width="2" height="3.4" fill="#d02020" opacity="0.85"/>
<rect x="496.0" y="316.5" width="2" height="1.5" fill="#d02020" opacity="0.85"/>
<rect x="502.6" y="317" width="2" height="1.5" fill="#d02020" opacity="0.85"/>
<rect x="509.3" y="317" width="2" height="2.1" fill="#d02020" opacity="0.85"/>
<rect x="512.7" y="317" width="2" height="1.5" fill="#d02020" opacity="0.85"/>
<rect x="516.0" y="317" width="2" height="2.1" fill="#d02020" opacity="0.85"/>
<rect x="522.7" y="317" width="2" height="1.5" fill="#d02020" opacity="0.85"/>
<rect x="526.0" y="317" width="2" height="1.6" fill="#d02020" opacity="0.85"/>
<rect x="529.4" y="317" width="2" height="2.2" fill="#d02020" opacity="0.85"/>
<rect x="532.7" y="317" width="2" height="1.5" fill="#d02020" opacity="0.85"/>
<rect x="536.0" y="317" width="2" height="1.5" fill="#d02020" opacity="0.85"/>
<rect x="539.4" y="317" width="2" height="1.6" fill="#d02020" opacity="0.85"/>
<rect x="542.7" y="317" width="2" height="1.5" fill="#d02020" opacity="0.85"/>
<rect x="546.1" y="317" width="2" height="1.5" fill="#d02020" opacity="0.85"/>
<rect x="549.4" y="317" width="2" height="1.5" fill="#d02020" opacity="0.85"/>
<rect x="559.4" y="317" width="2" height="1.5" fill="#d02020" opacity="0.85"/>
<rect x="562.8" y="317" width="2" height="1.5" fill="#d02020" opacity="0.85"/>
<rect x="569.4" y="317" width="2" height="1.5" fill="#d02020" opacity="0.85"/>
<rect x="582.8" y="317" width="2" height="3.3" fill="#d02020" opacity="0.85"/>
<rect x="586.1" y="317" width="2" height="3.5" fill="#d02020" opacity="0.85"/>
<rect x="589.5" y="317" width="2" height="3.2" fill="#d02020" opacity="0.85"/>
<rect x="592.8" y="317" width="2" height="3.3" fill="#d02020" opacity="0.85"/>
<rect x="596.2" y="317" width="2" height="4.1" fill="#d02020" opacity="0.85"/>
<rect x="599.5" y="317" width="2" height="3.7" fill="#d02020" opacity="0.85"/>
<rect x="602.8" y="317" width="2" height="4.4" fill="#d02020" opacity="0.85"/>
<rect x="606.2" y="317" width="2" height="3.8" fill="#d02020" opacity="0.85"/>
<rect x="609.5" y="317" width="2" height="3.3" fill="#d02020" opacity="0.85"/>
<rect x="612.9" y="317" width="2" height="3.0" fill="#d02020" opacity="0.85"/>
<rect x="616.2" y="317" width="2" height="2.2" fill="#d02020" opacity="0.85"/>
<rect x="619.5" y="317" width="2" height="1.5" fill="#d02020" opacity="0.85"/>
<rect x="626.2" y="317" width="2" height="1.5" fill="#d02020" opacity="0.85"/>
<rect x="636.2" y="317" width="2" height="1.6" fill="#d02020" opacity="0.85"/>
<rect x="639.6" y="317" width="2" height="1.9" fill="#d02020" opacity="0.85"/>
<rect x="642.9" y="317" width="2" height="2.0" fill="#d02020" opacity="0.85"/>
<rect x="646.3" y="317" width="2" height="2.2" fill="#d02020" opacity="0.85"/>
<rect x="649.6" y="317" width="2" height="1.9" fill="#d02020" opacity="0.85"/>
<rect x="652.9" y="317" width="2" height="2.2" fill="#d02020" opacity="0.85"/>
<rect x="656.3" y="317" width="2" height="2.0" fill="#d02020" opacity="0.85"/>
<rect x="659.6" y="317" width="2" height="2.8" fill="#d02020" opacity="0.85"/>
<rect x="663.0" y="317" width="2" height="2.8" fill="#d02020" opacity="0.85"/>
<rect x="666.3" y="317" width="2" height="2.3" fill="#d02020" opacity="0.85"/>
<rect x="669.6" y="317" width="2" height="2.0" fill="#d02020" opacity="0.85"/>
<rect x="673.0" y="317" width="2" height="2.8" fill="#d02020" opacity="0.85"/>
<rect x="676.3" y="317" width="2" height="2.1" fill="#d02020" opacity="0.85"/>
<rect x="679.7" y="317" width="2" height="2.1" fill="#d02020" opacity="0.85"/>
<rect x="683.0" y="317" width="2" height="1.7" fill="#d02020" opacity="0.85"/>
<rect x="686.3" y="317" width="2" height="2.1" fill="#d02020" opacity="0.85"/>
<rect x="689.7" y="317" width="2" height="2.2" fill="#d02020" opacity="0.85"/>
<rect x="693.0" y="317" width="2" height="2.3" fill="#d02020" opacity="0.85"/>
<rect x="696.4" y="317" width="2" height="1.5" fill="#d02020" opacity="0.85"/>
<rect x="699.7" y="317" width="2" height="1.5" fill="#d02020" opacity="0.85"/>
<rect x="703.0" y="317" width="2" height="1.5" fill="#d02020" opacity="0.85"/>
<rect x="706.4" y="316.5" width="2" height="1.5" fill="#d02020" opacity="0.85"/>
<rect x="709.7" y="316.5" width="2" height="1.5" fill="#d02020" opacity="0.85"/>
<rect x="713.1" y="316.5" width="2" height="1.5" fill="#d02020" opacity="0.85"/>
<rect x="716.4" y="316.5" width="2" height="1.5" fill="#d02020" opacity="0.85"/>
<rect x="719.7" y="316.0" width="2" height="2.0" fill="#d02020" opacity="0.85"/>
<rect x="723.1" y="315.8" width="2" height="2.2" fill="#d02020" opacity="0.85"/>
<rect x="726.4" y="315.4" width="2" height="2.6" fill="#d02020" opacity="0.85"/>
<rect x="729.8" y="315.5" width="2" height="2.5" fill="#d02020" opacity="0.85"/>
<rect x="733.1" y="315.5" width="2" height="2.5" fill="#d02020" opacity="0.85"/>
<rect x="736.4" y="315.3" width="2" height="2.7" fill="#d02020" opacity="0.85"/>
<rect x="739.8" y="315.9" width="2" height="2.1" fill="#d02020" opacity="0.85"/>
<rect x="743.1" y="316.0" width="2" height="2.0" fill="#d02020" opacity="0.85"/>
<rect x="746.5" y="316.0" width="2" height="2.0" fill="#d02020" opacity="0.85"/>
<rect x="766.5" y="317" width="2" height="1.9" fill="#d02020" opacity="0.85"/>
<rect x="769.8" y="317" width="2" height="2.7" fill="#d02020" opacity="0.85"/>
<rect x="773.2" y="317" width="2" height="2.6" fill="#d02020" opacity="0.85"/>
<rect x="783.2" y="317" width="2" height="1.5" fill="#d02020" opacity="0.85"/>
<rect x="786.5" y="317" width="2" height="1.5" fill="#d02020" opacity="0.85"/>
<rect x="789.9" y="317" width="2" height="1.5" fill="#d02020" opacity="0.85"/>
<rect x="816.6" y="316.5" width="2" height="1.5" fill="#d02020" opacity="0.85"/>
<rect x="840.0" y="316.5" width="2" height="1.5" fill="#d02020" opacity="0.85"/>
<rect x="850.0" y="316.5" width="2" height="1.5" fill="#d02020" opacity="0.85"/>
<polyline points="14.0,309.0 17.3,309.0 17.3,309.0 20.7,309.0 20.7,309.0 24.0,309.0 24.0,309.0 27.4,309.0 27.4,310.0 30.7,310.0 30.7,311.0 34.0,311.0 34.0,312.0 37.4,312.0 37.4,313.0 40.7,313.0 40.7,314.0 44.1,314.0 44.1,316.0 47.4,316.0 47.4,317.0 50.7,317.0 50.7,319.0 54.1,319.0 54.1,320.0 57.4,320.0 57.4,321.0 60.8,321.0 60.8,322.0 64.1,322.0 64.1,322.0 67.4,322.0 67.4,322.0 70.8,322.0 70.8,322.0 74.1,322.0 74.1,322.0 77.5,322.0 77.5,322.0 80.8,322.0 80.8,322.0 84.1,322.0 84.1,322.0 87.5,322.0 87.5,322.0 90.8,322.0 90.8,322.0 94.2,322.0 94.2,322.0 97.5,322.0 97.5,322.0 100.8,322.0 100.8,322.0 104.2,322.0 104.2,321.0 107.5,321.0 107.5,321.0 110.9,321.0 110.9,321.0 114.2,321.0 114.2,321.0 117.5,321.0 117.5,321.0 120.9,321.0 120.9,321.0 124.2,321.0 124.2,321.0 127.6,321.0 127.6,321.0 130.9,321.0 130.9,321.0 134.2,321.0 134.2,321.0 137.6,321.0 137.6,321.0 140.9,321.0 140.9,321.0 144.3,321.0 144.3,321.0 147.6,321.0 147.6,321.0 150.9,321.0 150.9,321.0 154.3,321.0 154.3,321.0 157.6,321.0 157.6,321.0 161.0,321.0 161.0,321.0 164.3,321.0 164.3,321.0 167.6,321.0 167.6,321.0 171.0,321.0 171.0,321.0 174.3,321.0 174.3,321.0 177.7,321.0 177.7,321.0 181.0,321.0 181.0,321.0 184.3,321.0 184.3,321.0 187.7,321.0 187.7,321.0 191.0,321.0 191.0,321.0 194.4,321.0 194.4,321.0 197.7,321.0 197.7,321.0 201.0,321.0 201.0,321.0 204.4,321.0 204.4,321.0 207.7,321.0 207.7,321.0 211.1,321.0 211.1,319.0 214.4,319.0 214.4,318.0 217.7,318.0 217.7,317.0 221.1,317.0 221.1,316.0 224.4,316.0 224.4,315.0 227.8,315.0 227.8,314.0 231.1,314.0 231.1,314.0 234.4,314.0 234.4,313.0 237.8,313.0 237.8,312.0 241.1,312.0 241.1,311.0 244.5,311.0 244.5,311.0 247.8,311.0 247.8,310.0 251.1,310.0 251.1,309.0 254.5,309.0 254.5,309.0 257.8,309.0 257.8,308.0 261.2,308.0 261.2,308.0 264.5,308.0 264.5,307.0 267.8,307.0 267.8,307.0 271.2,307.0 271.2,306.0 274.5,306.0 274.5,306.0 277.9,306.0 277.9,305.0 281.2,305.0 281.2,306.0 284.5,306.0 284.5,306.0 287.9,306.0 287.9,307.0 291.2,307.0 291.2,307.0 294.6,307.0 294.6,308.0 297.9,308.0 297.9,308.0 301.2,308.0 301.2,309.0 304.6,309.0 304.6,309.0 307.9,309.0 307.9,310.0 311.3,310.0 311.3,311.0 314.6,311.0 314.6,311.0 317.9,311.0 317.9,312.0 321.3,312.0 321.3,313.0 324.6,313.0 324.6,313.0 328.0,313.0 328.0,312.0 331.3,312.0 331.3,311.0 334.6,311.0 334.6,311.0 338.0,311.0 338.0,311.0 341.3,311.0 341.3,311.0 344.7,311.0 344.7,311.0 348.0,311.0 348.0,311.0 351.3,311.0 351.3,311.0 354.7,311.0 354.7,311.0 358.0,311.0 358.0,310.0 361.4,310.0 361.4,309.0 364.7,309.0 364.7,309.0 368.0,309.0 368.0,308.0 371.4,308.0 371.4,306.0 374.7,306.0 374.7,305.0 378.1,305.0 378.1,303.0 381.4,303.0 381.4,302.0 384.7,302.0 384.7,301.0 388.1,301.0 388.1,300.0 391.4,300.0 391.4,300.0 394.8,300.0 394.8,300.0 398.1,300.0 398.1,299.0 401.4,299.0 401.4,299.0 404.8,299.0 404.8,299.0 408.1,299.0 408.1,298.0 411.5,298.0 411.5,298.0 414.8,298.0 414.8,298.0 418.1,298.0 418.1,297.0 421.5,297.0 421.5,297.0 424.8,297.0 424.8,297.0 428.2,297.0 428.2,297.0 431.5,297.0 431.5,297.0 434.8,297.0 434.8,296.0 438.2,296.0 438.2,296.0 441.5,296.0 441.5,296.0 444.9,296.0 444.9,296.0 448.2,296.0 448.2,296.0 451.5,296.0 451.5,296.0 454.9,296.0 454.9,295.0 458.2,295.0 458.2,295.0 461.6,295.0 461.6,295.0 464.9,295.0 464.9,295.0 468.2,295.0 468.2,295.0 471.6,295.0 471.6,295.0 474.9,295.0 474.9,294.0 478.3,294.0 478.3,293.0 481.6,293.0 481.6,292.0 484.9,292.0 484.9,291.0 488.3,291.0 488.3,290.0 491.6,290.0 491.6,289.0 495.0,289.0 495.0,289.0 498.3,289.0 498.3,289.0 501.6,289.0 501.6,289.0 505.0,289.0 505.0,290.0 508.3,290.0 508.3,290.0 511.7,290.0 511.7,291.0 515.0,291.0 515.0,291.0 518.3,291.0 518.3,292.0 521.7,292.0 521.7,292.0 525.0,292.0 525.0,292.0 528.4,292.0 528.4,293.0 531.7,293.0 531.7,293.0 535.0,293.0 535.0,294.0 538.4,294.0 538.4,294.0 541.7,294.0 541.7,294.0 545.1,294.0 545.1,294.0 548.4,294.0 548.4,295.0 551.7,295.0 551.7,295.0 555.1,295.0 555.1,295.0 558.4,295.0 558.4,295.0 561.8,295.0 561.8,295.0 565.1,295.0 565.1,295.0 568.4,295.0 568.4,295.0 571.8,295.0 571.8,295.0 575.1,295.0 575.1,295.0 578.5,295.0 578.5,295.0 581.8,295.0 581.8,297.0 585.1,297.0 585.1,298.0 588.5,298.0 588.5,299.0 591.8,299.0 591.8,300.0 595.2,300.0 595.2,301.0 598.5,301.0 598.5,302.0 601.8,302.0 601.8,304.0 605.2,304.0 605.2,305.0 608.5,305.0 608.5,306.0 611.9,306.0 611.9,307.0 615.2,307.0 615.2,307.0 618.5,307.0 618.5,308.0 621.9,308.0 621.9,308.0 625.2,308.0 625.2,308.0 628.6,308.0 628.6,309.0 631.9,309.0 631.9,309.0 635.2,309.0 635.2,309.0 638.6,309.0 638.6,310.0 641.9,310.0 641.9,311.0 645.3,311.0 645.3,311.0 648.6,311.0 648.6,312.0 651.9,312.0 651.9,313.0 655.3,313.0 655.3,313.0 658.6,313.0 658.6,314.0 662.0,314.0 662.0,315.0 665.3,315.0 665.3,315.0 668.6,315.0 668.6,316.0 672.0,316.0 672.0,317.0 675.3,317.0 675.3,317.0 678.7,317.0 678.7,318.0 682.0,318.0 682.0,319.0 685.3,319.0 685.3,319.0 688.7,319.0 688.7,320.0 692.0,320.0 692.0,321.0 695.4,321.0 695.4,321.0 698.7,321.0 698.7,322.0 702.0,322.0 702.0,322.0 705.4,322.0 705.4,322.0 708.7,322.0 708.7,321.0 712.1,321.0 712.1,321.0 715.4,321.0 715.4,320.0 718.7,320.0 718.7,320.0 722.1,320.0 722.1,319.0 725.4,319.0 725.4,319.0 728.8,319.0 728.8,318.0 732.1,318.0 732.1,317.0 735.4,317.0 735.4,317.0 738.8,317.0 738.8,316.0 742.1,316.0 742.1,315.0 745.5,315.0 745.5,315.0 748.8,315.0 748.8,315.0 752.1,315.0 752.1,315.0 755.5,315.0 755.5,315.0 758.8,315.0 758.8,316.0 762.2,316.0 762.2,316.0 765.5,316.0 765.5,317.0 768.8,317.0 768.8,317.0 772.2,317.0 772.2,318.0 775.5,318.0 775.5,318.0 778.9,318.0 778.9,318.0 782.2,318.0 782.2,318.0 785.5,318.0 785.5,318.0 788.9,318.0 788.9,318.0 792.2,318.0 792.2,318.0 795.6,318.0 795.6,318.0 798.9,318.0 798.9,318.0 802.2,318.0 802.2,318.0 805.6,318.0 805.6,318.0 808.9,318.0 808.9,318.0 812.3,318.0 812.3,318.0 815.6,318.0 815.6,318.0 818.9,318.0 818.9,318.0 822.3,318.0 822.3,318.0 825.6,318.0 825.6,318.0 829.0,318.0 829.0,318.0 832.3,318.0 832.3,318.0 835.6,318.0 835.6,318.0 839.0,318.0 839.0,318.0 842.3,318.0 842.3,318.0 845.7,318.0 845.7,318.0 849.0,318.0 849.0,318.0 852.3,318.0 852.3,318.0 855.7,318.0 855.7,318.0 859.0,318.0 859.0,318.0 862.4,318.0 862.4,318.0 865.7,318.0 865.7,318.0 869.0,318.0 869.0,318.0 871.0,318.0" fill="none" stroke="#d82020" stroke-width="2"/>
<polyline points="14.0,309.0 30.0,309.0 45.0,313.0 60.0,320.0 70.0,322.0 90.0,322.0 130.0,321.0 200.0,321.0 215.0,321.0 220.0,318.5 240.0,313.0 260.0,309.0 280.0,306.0 285.0,305.0 295.0,307.0 310.0,309.0 320.0,311.0 330.0,313.0 340.0,311.0 360.0,311.0 375.0,308.0 390.0,301.0 410.0,299.0 430.0,297.0 450.0,296.0 470.0,295.0 480.0,295.0 490.0,292.0 500.0,289.0 510.0,289.5 520.0,291.0 530.0,292.0 545.0,294.0 560.0,295.0 585.0,295.0 590.0,297.0 600.0,300.0 610.0,304.0 620.0,307.0 630.0,308.0 640.0,309.0 660.0,313.0 680.0,317.0 700.0,321.0 710.0,322.0 725.0,320.0 740.0,317.0 750.0,315.0 760.0,315.0 770.0,316.0 780.0,318.0 800.0,318.5 871.0,318.0" fill="none" stroke="#1e861e" stroke-width="2" opacity="0.88"/>
<rect x="14.5" y="285.5" width="871" height="52.5" fill="none" stroke="#a8b8c8"/>
<rect x="15" y="286" width="31" height="11" fill="#3a4048"/>
<text transform="translate(16.6,296.6) scale(0.86,1)" font-family="Liberation Sans" font-size="11" fill="#d82828">MACD</text>
<g font-family="Liberation Sans" font-size="11" fill="#ffffff" stroke="#ffffff" stroke-width="0.25">
<rect x="886" y="290" width="4" height="1" fill="#a8b8c8"/><text x="893" y="297">+0.01</text>
<rect x="886" y="317" width="4" height="1" fill="#a8b8c8"/><text x="893" y="324">-0.00</text>
</g>
<g shape-rendering="crispEdges">
<line x1="26.5" y1="345" x2="26.5" y2="400" stroke="#7c8692" stroke-width="1" stroke-dasharray="3 3"/>
<line x1="46.5" y1="345" x2="46.5" y2="400" stroke="#7c8692" stroke-width="1" stroke-dasharray="3 3"/>
<line x1="66.5" y1="345" x2="66.5" y2="400" stroke="#7c8692" stroke-width="1" stroke-dasharray="3 3"/>
<line x1="86.5" y1="345" x2="86.5" y2="400" stroke="#7c8692" stroke-width="1" stroke-dasharray="3 3"/>
<line x1="106.5" y1="345" x2="106.5" y2="400" stroke="#7c8692" stroke-width="1" stroke-dasharray="3 3"/>
<line x1="126.5" y1="345" x2="126.5" y2="400" stroke="#7c8692" stroke-width="1" stroke-dasharray="3 3"/>
<line x1="146.5" y1="345" x2="146.5" y2="400" stroke="#7c8692" stroke-width="1" stroke-dasharray="3 3"/>
<line x1="166.5" y1="345" x2="166.5" y2="400" stroke="#7c8692" stroke-width="1" stroke-dasharray="3 3"/>
<line x1="186.5" y1="345" x2="186.5" y2="400" stroke="#7c8692" stroke-width="1" stroke-dasharray="3 3"/>
<line x1="206.5" y1="345" x2="206.5" y2="400" stroke="#7c8692" stroke-width="1" stroke-dasharray="3 3"/>
<line x1="226.5" y1="345" x2="226.5" y2="400" stroke="#7c8692" stroke-width="1" stroke-dasharray="3 3"/>
<line x1="246.5" y1="345" x2="246.5" y2="400" stroke="#7c8692" stroke-width="1" stroke-dasharray="3 3"/>
<line x1="267.5" y1="345" x2="267.5" y2="400" stroke="#7c8692" stroke-width="1" stroke-dasharray="3 3"/>
<line x1="287.5" y1="345" x2="287.5" y2="400" stroke="#7c8692" stroke-width="1" stroke-dasharray="3 3"/>
<line x1="307.5" y1="345" x2="307.5" y2="400" stroke="#7c8692" stroke-width="1" stroke-dasharray="3 3"/>
<line x1="327.5" y1="345" x2="327.5" y2="400" stroke="#7c8692" stroke-width="1" stroke-dasharray="3 3"/>
<line x1="347.5" y1="345" x2="347.5" y2="400" stroke="#7c8692" stroke-width="1" stroke-dasharray="3 3"/>
<line x1="367.5" y1="345" x2="367.5" y2="400" stroke="#7c8692" stroke-width="1" stroke-dasharray="3 3"/>
<line x1="387.5" y1="345" x2="387.5" y2="400" stroke="#7c8692" stroke-width="1" stroke-dasharray="3 3"/>
<line x1="407.5" y1="345" x2="407.5" y2="400" stroke="#8090a0" stroke-width="1"/>
<line x1="427.5" y1="345" x2="427.5" y2="400" stroke="#7c8692" stroke-width="1" stroke-dasharray="3 3"/>
<line x1="447.5" y1="345" x2="447.5" y2="400" stroke="#7c8692" stroke-width="1" stroke-dasharray="3 3"/>
<line x1="467.5" y1="345" x2="467.5" y2="400" stroke="#7c8692" stroke-width="1" stroke-dasharray="3 3"/>
<line x1="487.5" y1="345" x2="487.5" y2="400" stroke="#7c8692" stroke-width="1" stroke-dasharray="3 3"/>
<line x1="507.5" y1="345" x2="507.5" y2="400" stroke="#7c8692" stroke-width="1" stroke-dasharray="3 3"/>
<line x1="527.5" y1="345" x2="527.5" y2="400" stroke="#7c8692" stroke-width="1" stroke-dasharray="3 3"/>
<line x1="547.5" y1="345" x2="547.5" y2="400" stroke="#7c8692" stroke-width="1" stroke-dasharray="3 3"/>
<line x1="567.5" y1="345" x2="567.5" y2="400" stroke="#7c8692" stroke-width="1" stroke-dasharray="3 3"/>
<line x1="587.5" y1="345" x2="587.5" y2="400" stroke="#7c8692" stroke-width="1" stroke-dasharray="3 3"/>
<line x1="607.5" y1="345" x2="607.5" y2="400" stroke="#7c8692" stroke-width="1" stroke-dasharray="3 3"/>
<line x1="627.5" y1="345" x2="627.5" y2="400" stroke="#7c8692" stroke-width="1" stroke-dasharray="3 3"/>
<line x1="647.5" y1="345" x2="647.5" y2="400" stroke="#7c8692" stroke-width="1" stroke-dasharray="3 3"/>
<line x1="667.5" y1="345" x2="667.5" y2="400" stroke="#7c8692" stroke-width="1" stroke-dasharray="3 3"/>
<line x1="687.5" y1="345" x2="687.5" y2="400" stroke="#7c8692" stroke-width="1" stroke-dasharray="3 3"/>
<line x1="707.5" y1="345" x2="707.5" y2="400" stroke="#7c8692" stroke-width="1" stroke-dasharray="3 3"/>
<line x1="727.5" y1="345" x2="727.5" y2="400" stroke="#7c8692" stroke-width="1" stroke-dasharray="3 3"/>
<line x1="747.5" y1="345" x2="747.5" y2="400" stroke="#7c8692" stroke-width="1" stroke-dasharray="3 3"/>
<line x1="768.5" y1="345" x2="768.5" y2="400" stroke="#7c8692" stroke-width="1" stroke-dasharray="3 3"/>
<line x1="788.5" y1="345" x2="788.5" y2="400" stroke="#7c8692" stroke-width="1" stroke-dasharray="3 3"/>
<line x1="808.5" y1="345" x2="808.5" y2="400" stroke="#7c8692" stroke-width="1" stroke-dasharray="3 3"/>
<line x1="828.5" y1="345" x2="828.5" y2="400" stroke="#7c8692" stroke-width="1" stroke-dasharray="3 3"/>
<line x1="848.5" y1="345" x2="848.5" y2="400" stroke="#8090a0" stroke-width="1"/>
<line x1="868.5" y1="345" x2="868.5" y2="400" stroke="#7c8692" stroke-width="1" stroke-dasharray="3 3"/>
<line x1="14" y1="376.5" x2="886" y2="376.5" stroke="#7c8692" stroke-width="1" stroke-dasharray="3 3"/>
</g>
<rect x="14" y="356" width="857" height="2" fill="#1818a8"/>
<rect x="14" y="396" width="857" height="2" fill="#1818a8"/>
<polyline points="14.0,368.6 18.6,376.3 30.0,385.0 50.0,390.0 70.0,393.0 77.8,391.6 86.4,375.3 94.0,379.2 100.0,375.3 103.0,380.1 108.0,374.8 113.0,380.0 120.0,383.9 127.0,387.7 131.0,391.2 137.0,377.2 142.0,368.6 148.0,371.5 153.0,369.6 157.0,374.8 161.0,363.9 165.0,381.0 172.0,381.6 178.0,383.9 182.0,388.7 186.0,389.3 190.0,383.0 196.0,382.4 202.0,375.0 206.0,381.0 210.0,377.2 217.0,379.2 222.0,359.1 226.0,357.6 230.0,360.0 234.0,355.0 238.0,354.0 244.0,362.0 250.0,359.0 256.0,358.0 260.0,355.0 264.0,353.0 270.0,360.0 272.0,362.0 277.0,357.0 279.0,354.0 281.0,368.0 285.0,370.0 288.0,371.0 292.0,381.0 296.0,384.0 302.0,386.0 304.0,379.0 307.0,382.0 311.0,385.0 315.0,385.0 318.0,380.0 322.0,383.0 328.0,376.0 334.0,364.0 340.0,360.0 344.0,359.0 349.0,369.0 353.0,368.0 357.0,359.0 361.0,368.0 367.0,359.0 373.0,366.0 377.0,362.0 380.0,353.0 384.0,355.0 387.8,355.6 396.7,348.9 399.3,354.6 400.8,359.3 405.5,357.2 409.0,354.6 413.0,355.0 417.0,363.4 422.7,359.0 426.9,360.3 431.0,362.4 434.2,355.6 438.3,357.2 443.5,358.2 446.7,354.6 451.9,352.5 455.0,353.5 457.0,359.3 460.2,353.0 464.4,353.0 467.0,357.2 474.3,361.9 477.4,357.7 479.5,348.3 482.0,346.8 488.3,347.3 493.0,350.4 495.6,355.6 497.7,361.9 499.0,362.0 506.0,365.0 514.0,364.0 522.0,366.0 527.0,364.0 534.0,375.0 541.0,362.0 549.0,363.0 556.0,357.0 561.0,364.0 567.0,359.0 571.0,368.0 574.0,362.5 579.0,370.5 587.0,383.0 594.0,376.0 602.0,389.0 608.0,385.0 616.0,384.0 619.0,385.0 627.0,371.5 633.0,370.5 641.0,383.0 648.0,382.7 657.7,389.0 666.0,384.8 671.0,382.7 681.7,394.0 691.0,388.0 697.0,380.6 703.5,393.8 716.0,378.5 721.0,371.0 730.6,371.0 737.0,359.8 742.0,365.0 749.0,364.6 759.8,376.5 765.0,380.6 771.0,380.6 778.5,389.0 781.7,384.8 788.0,388.0 794.0,380.6 800.0,383.8 813.0,375.0 818.0,366.0 821.0,379.6 825.0,377.5 838.0,383.8 842.0,376.5 848.0,378.5 855.0,375.0 860.8,371.0 864.0,373.8 870.8,372.0" fill="none" stroke="#f08830" stroke-width="1.1"/>
<polyline points="14.0,368.6 18.6,376.3 30.0,385.0 50.0,390.0 70.0,393.0 77.8,391.6 86.4,375.3 94.0,379.2 100.0,375.3 103.0,380.1 108.0,374.8 113.0,380.0 120.0,383.9 127.0,387.7 131.0,391.2 137.0,377.2 142.0,368.6 148.0,371.5 153.0,369.6 157.0,374.8 161.0,363.9 165.0,381.0 172.0,381.6 178.0,383.9 182.0,388.7 186.0,389.3 190.0,383.0 196.0,382.4 202.0,375.0 206.0,381.0 210.0,377.2 217.0,379.2 222.0,359.1 226.0,357.6 230.0,360.0 234.0,355.0 238.0,354.0 244.0,362.0 250.0,359.0 256.0,358.0 260.0,355.0 264.0,353.0 270.0,360.0 272.0,362.0 277.0,357.0 279.0,354.0 281.0,368.0 285.0,370.0 288.0,371.0 292.0,381.0 296.0,384.0 302.0,386.0 304.0,379.0 307.0,382.0 311.0,385.0 315.0,385.0 318.0,380.0 322.0,383.0 328.0,376.0 334.0,364.0 340.0,360.0 344.0,359.0 349.0,369.0 353.0,368.0 357.0,359.0 361.0,368.0 367.0,359.0 373.0,366.0 377.0,362.0 380.0,353.0 384.0,355.0 387.8,355.6 396.7,348.9 399.3,354.6 400.8,359.3 405.5,357.2 409.0,354.6 413.0,355.0 417.0,363.4 422.7,359.0 426.9,360.3 431.0,362.4 434.2,355.6 438.3,357.2 443.5,358.2 446.7,354.6 451.9,352.5 455.0,353.5 457.0,359.3 460.2,353.0 464.4,353.0 467.0,357.2 474.3,361.9 477.4,357.7 479.5,348.3 482.0,346.8 488.3,347.3 493.0,350.4 495.6,355.6 497.7,361.9 499.0,362.0 506.0,365.0 514.0,364.0 522.0,366.0 527.0,364.0 534.0,375.0 541.0,362.0 549.0,363.0 556.0,357.0 561.0,364.0 567.0,359.0 571.0,368.0 574.0,362.5 579.0,370.5 587.0,383.0 594.0,376.0 602.0,389.0 608.0,385.0 616.0,384.0 619.0,385.0 627.0,371.5 633.0,370.5 641.0,383.0 648.0,382.7 657.7,389.0 666.0,384.8 671.0,382.7 681.7,394.0 691.0,388.0 697.0,380.6 703.5,393.8 716.0,378.5 721.0,371.0 730.6,371.0 737.0,359.8 742.0,365.0 749.0,364.6 759.8,376.5 765.0,380.6 771.0,380.6 778.5,389.0 781.7,384.8 788.0,388.0 794.0,380.6 800.0,383.8 813.0,375.0 818.0,366.0 821.0,379.6 825.0,377.5 838.0,383.8 842.0,376.5 848.0,378.5 855.0,375.0 860.8,371.0 864.0,373.8 870.8,372.0" fill="none" stroke="#c830d0" stroke-width="1.1" clip-path="url(#rsiup)"/>
<rect x="14.5" y="344.5" width="871" height="56" fill="none" stroke="#a8b8c8"/>
<rect x="15" y="345" width="16.5" height="13" fill="#3a4048"/>
<text transform="translate(16.6,356) scale(0.8,1)" font-family="Liberation Sans" font-size="11" fill="#f08830">RSI</text>
<text x="893" y="383" font-family="Liberation Sans" font-size="11" fill="#f4f0e8">50</text>
<rect x="26" y="400" width="1" height="4" fill="#a8b8c8"/>
<rect x="46" y="400" width="1" height="4" fill="#a8b8c8"/>
<rect x="66" y="400" width="1" height="4" fill="#a8b8c8"/>
<rect x="86" y="400" width="1" height="4" fill="#a8b8c8"/>
<rect x="106" y="400" width="1" height="4" fill="#a8b8c8"/>
<rect x="126" y="400" width="1" height="4" fill="#a8b8c8"/>
<rect x="146" y="400" width="1" height="4" fill="#a8b8c8"/>
<rect x="166" y="400" width="1" height="4" fill="#a8b8c8"/>
<rect x="186" y="400" width="1" height="4" fill="#a8b8c8"/>
<rect x="206" y="400" width="1" height="4" fill="#a8b8c8"/>
<rect x="226" y="400" width="1" height="4" fill="#a8b8c8"/>
<rect x="246" y="400" width="1" height="4" fill="#a8b8c8"/>
<rect x="267" y="400" width="1" height="4" fill="#a8b8c8"/>
<rect x="287" y="400" width="1" height="4" fill="#a8b8c8"/>
<rect x="307" y="400" width="1" height="4" fill="#a8b8c8"/>
<rect x="327" y="400" width="1" height="4" fill="#a8b8c8"/>
<rect x="347" y="400" width="1" height="4" fill="#a8b8c8"/>
<rect x="367" y="400" width="1" height="4" fill="#a8b8c8"/>
<rect x="387" y="400" width="1" height="4" fill="#a8b8c8"/>
<rect x="407" y="400" width="1" height="4" fill="#a8b8c8"/>
<rect x="427" y="400" width="1" height="4" fill="#a8b8c8"/>
<rect x="447" y="400" width="1" height="4" fill="#a8b8c8"/>
<rect x="467" y="400" width="1" height="4" fill="#a8b8c8"/>
<rect x="487" y="400" width="1" height="4" fill="#a8b8c8"/>
<rect x="507" y="400" width="1" height="4" fill="#a8b8c8"/>
<rect x="527" y="400" width="1" height="4" fill="#a8b8c8"/>
<rect x="547" y="400" width="1" height="4" fill="#a8b8c8"/>
<rect x="567" y="400" width="1" height="4" fill="#a8b8c8"/>
<rect x="587" y="400" width="1" height="4" fill="#a8b8c8"/>
<rect x="607" y="400" width="1" height="4" fill="#a8b8c8"/>
<rect x="627" y="400" width="1" height="4" fill="#a8b8c8"/>
<rect x="647" y="400" width="1" height="4" fill="#a8b8c8"/>
<rect x="667" y="400" width="1" height="4" fill="#a8b8c8"/>
<rect x="687" y="400" width="1" height="4" fill="#a8b8c8"/>
<rect x="707" y="400" width="1" height="4" fill="#a8b8c8"/>
<rect x="727" y="400" width="1" height="4" fill="#a8b8c8"/>
<rect x="747" y="400" width="1" height="4" fill="#a8b8c8"/>
<rect x="768" y="400" width="1" height="4" fill="#a8b8c8"/>
<rect x="788" y="400" width="1" height="4" fill="#a8b8c8"/>
<rect x="808" y="400" width="1" height="4" fill="#a8b8c8"/>
<rect x="828" y="400" width="1" height="4" fill="#a8b8c8"/>
<rect x="848" y="400" width="1" height="4" fill="#a8b8c8"/>
<rect x="868" y="400" width="1" height="4" fill="#a8b8c8"/>
<rect x="14" y="377" width="2" height="27" fill="#d0e8f0"/>
<path d="M15.5 377.5 H76 Q78 377.5 78 379.5 V394 Q78 396 76 396 H15.5 Z" fill="#5a6a80" stroke="#b0c8dc" stroke-width="1"/>
<rect x="16" y="395.5" width="61" height="1.5" fill="#90a8cc"/>
<rect x="16" y="395.5" width="61" height="1.5" fill="#5a78f0"/>
<text x="22" y="391" font-family="Liberation Sans" font-size="11" fill="#eef2f6">Май 2020</text>
<rect x="407" y="377" width="2" height="27" fill="#d0e8f0"/>
<path d="M408.5 377.5 H475 Q477 377.5 477 379.5 V394 Q477 396 475 396 H408.5 Z" fill="#5a6a80" stroke="#b0c8dc" stroke-width="1"/>
<rect x="409" y="395.5" width="67" height="1.5" fill="#90a8cc"/>
<rect x="409" y="395.5" width="67" height="1.5" fill="#5a78f0"/>
<text x="415" y="391" font-family="Liberation Sans" font-size="11" fill="#eef2f6">Июнь 2020</text>
<rect x="848" y="377" width="2" height="27" fill="#d0e8f0"/>
<path d="M849.5 377.5 H916 Q918 377.5 918 379.5 V394 Q918 396 916 396 H849.5 Z" fill="#5a6a80" stroke="#b0c8dc" stroke-width="1"/>
<rect x="850" y="395.5" width="67" height="1.5" fill="#90a8cc"/>
<rect x="850" y="395.5" width="21" height="1.5" fill="#5a78f0"/>
<text x="856" y="391" font-family="Liberation Sans" font-size="11" fill="#eef2f6">Июль 2020</text>
<g font-family="Liberation Sans" font-size="11" fill="#ffffff" stroke="#ffffff" stroke-width="0.25" text-anchor="middle">
<text transform="translate(25.6,423) scale(0.92,1)">5</text>
<text transform="translate(45.6,423) scale(0.92,1)">6</text>
<text transform="translate(65.6,423) scale(0.92,1)">7</text>
<text transform="translate(85.6,423) scale(0.92,1)">8</text>
<text transform="translate(105.6,423) scale(0.92,1)">11</text>
<text transform="translate(125.6,423) scale(0.92,1)">12</text>
<text transform="translate(145.6,423) scale(0.92,1)">13</text>
<text transform="translate(165.6,423) scale(0.92,1)">14</text>
<text transform="translate(185.6,423) scale(0.92,1)">15</text>
<text transform="translate(205.6,423) scale(0.92,1)">18</text>
<text transform="translate(225.6,423) scale(0.92,1)">19</text>
<text transform="translate(245.6,423) scale(0.92,1)">20</text>
<text transform="translate(266.6,423) scale(0.92,1)">21</text>
<text transform="translate(286.6,423) scale(0.92,1)">22</text>
<text transform="translate(306.6,423) scale(0.92,1)">25</text>
<text transform="translate(326.6,423) scale(0.92,1)">26</text>
<text transform="translate(346.6,423) scale(0.92,1)">27</text>
<text transform="translate(366.6,423) scale(0.92,1)">28</text>
<text transform="translate(386.6,423) scale(0.92,1)">29</text>
<text transform="translate(406.6,423) scale(0.92,1)">1</text>
<text transform="translate(426.6,423) scale(0.92,1)">2</text>
<text transform="translate(446.6,423) scale(0.92,1)">3</text>
<text transform="translate(466.6,423) scale(0.92,1)">4</text>
<text transform="translate(486.6,423) scale(0.92,1)">5</text>
<text transform="translate(506.6,423) scale(0.92,1)">8</text>
<text transform="translate(526.6,423) scale(0.92,1)">9</text>
<text transform="translate(546.6,423) scale(0.92,1)">10</text>
<text transform="translate(566.6,423) scale(0.92,1)">11</text>
<text transform="translate(586.6,423) scale(0.92,1)">12</text>
<text transform="translate(606.6,423) scale(0.92,1)">15</text>
<text transform="translate(626.6,423) scale(0.92,1)">16</text>
<text transform="translate(646.6,423) scale(0.92,1)">17</text>
<text transform="translate(666.6,423) scale(0.92,1)">18</text>
<text transform="translate(686.6,423) scale(0.92,1)">19</text>
<text transform="translate(706.6,423) scale(0.92,1)">22</text>
<text transform="translate(726.6,423) scale(0.92,1)">23</text>
<text transform="translate(746.6,423) scale(0.92,1)">24</text>
<text transform="translate(767.6,423) scale(0.92,1)">25</text>
<text transform="translate(787.6,423) scale(0.92,1)">26</text>
<text transform="translate(807.6,423) scale(0.92,1)">29</text>
<text transform="translate(827.6,423) scale(0.92,1)">30</text>
<text transform="translate(847.6,423) scale(0.92,1)">1</text>
<text transform="translate(867.6,423) scale(0.92,1)">2</text>
</g>
</svg></body></html>
